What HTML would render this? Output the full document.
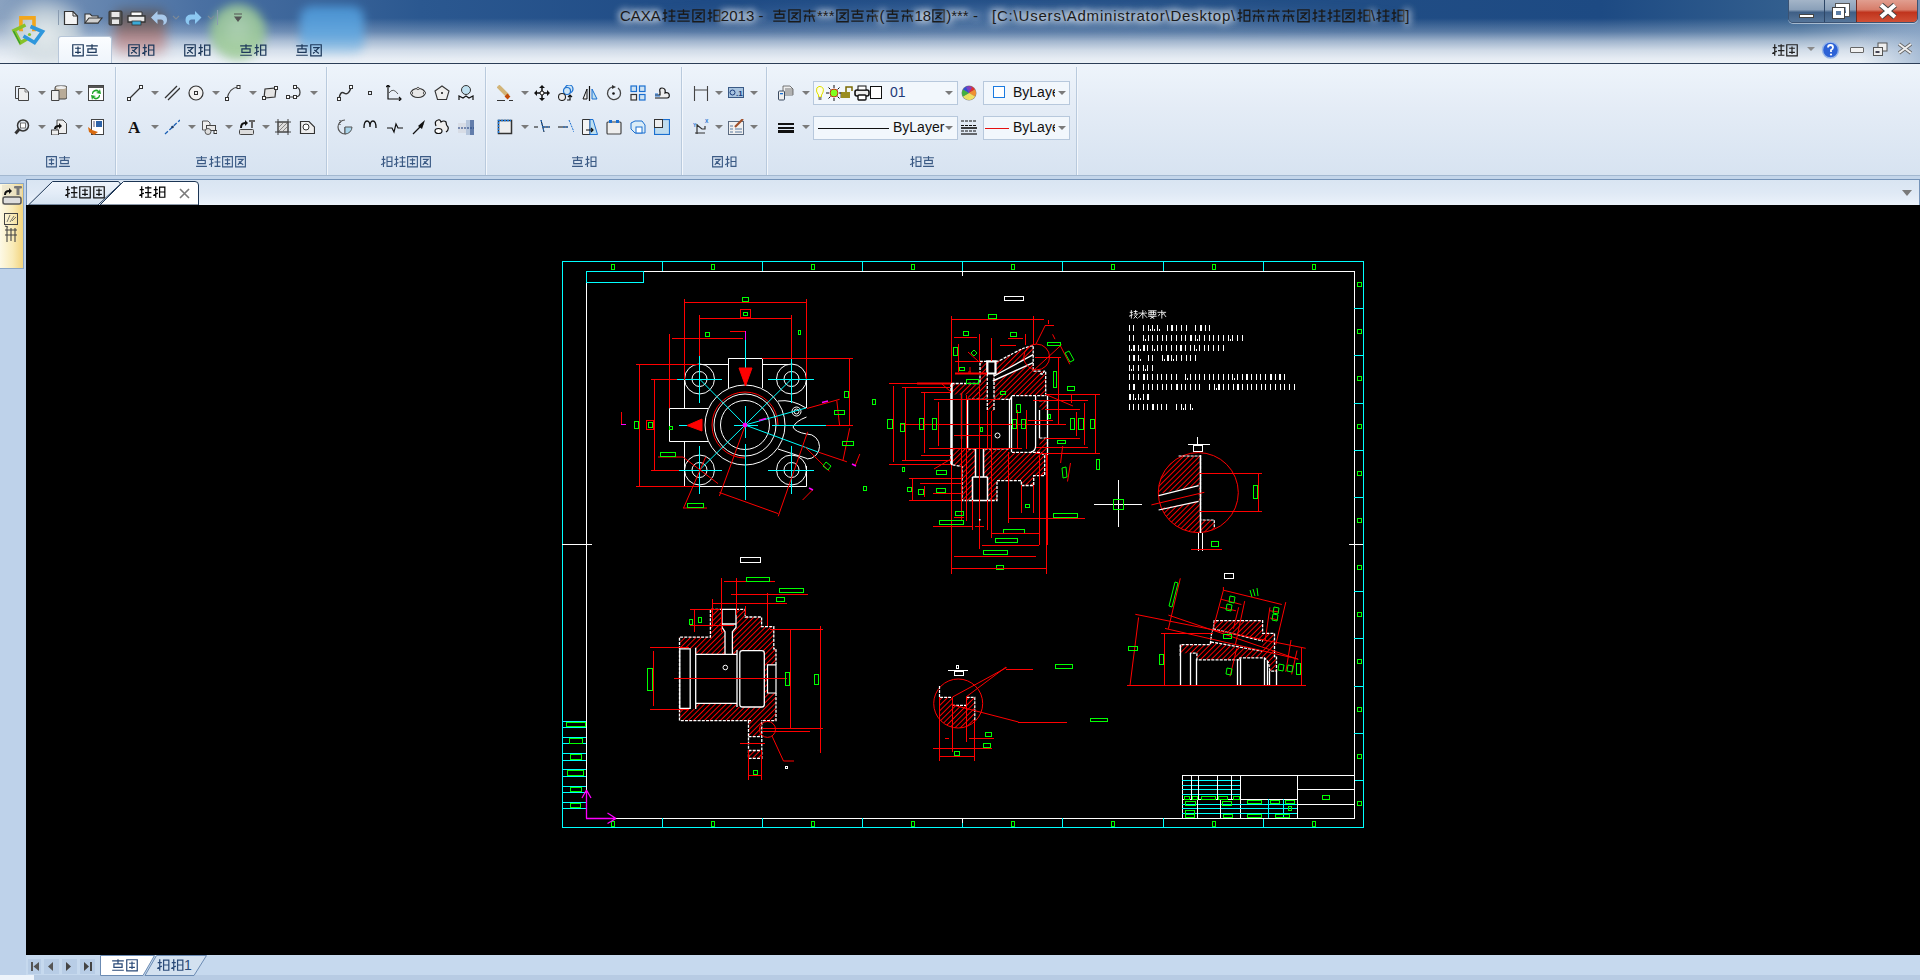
<!DOCTYPE html>
<html><head><meta charset="utf-8">
<style>
*{margin:0;padding:0;box-sizing:border-box}
html,body{width:1920px;height:980px;overflow:hidden;background:#000;font-family:"Liberation Sans",sans-serif}
.a{position:absolute}
#title{left:0;top:0;width:1920px;height:64px;overflow:hidden;
 background:linear-gradient(180deg,#2a5790 0px,#30609a 18px,#5f86b2 32px,#b9cade 44px,#e6edf5 54px,#edf2f8 63px)}
#ribbon{left:0;top:63px;width:1920px;height:113px;background:linear-gradient(180deg,#eef4fb 0%,#e4ecf6 40%,#d7e3f1 100%);border-top:1px solid #2c3e57;border-bottom:1px solid #a3b8d0}
.sep{position:absolute;top:5px;width:1px;height:105px;background:#c2d2e4;box-shadow:1px 0 0 #f5f9fd}
.glabel{position:absolute;top:90px;height:16px;font-size:13px;color:#3b5a84;text-align:center}
.dd{position:absolute;width:0;height:0;border-left:4px solid transparent;border-right:4px solid transparent;border-top:4px solid #7a7a7a}
.ic{position:absolute;width:16px;height:16px}
.combo{position:absolute;height:24px;border:1px solid #b7c8dc;background:#f2f7fc;font-size:13px;color:#1a1a1a}
#tabs{left:0;top:176px;width:1920px;height:29px;background:#c8d9ec}
#canvas{left:26px;top:205px;width:1894px;height:750px;background:#000}
#leftp{left:0;top:176px;width:26px;height:779px;background:#bed2ea}
#status{left:0;top:955px;width:1920px;height:25px;background:#c6d9ee}
.tabl{top:42px;height:18px;font-size:14px;color:#1e395b;text-align:center}
.ttx{top:7px;font-size:15px;color:#1a1a1a;white-space:nowrap;text-shadow:0 0 8px #fff,0 0 6px #fff,0 0 10px rgba(255,255,255,.9)}
.cjg{display:inline-block;width:1em;height:1em;vertical-align:-0.13em;fill:none;stroke:currentColor;stroke-width:1.05;overflow:visible}

</style></head><body>
<div id="title" class="a">
 <div class="a" style="left:0;top:0;width:1920px;height:64px;background:linear-gradient(90deg,#8aa2c0 0px,#6f8db4 60px,#4a70a2 200px,#2b5890 420px,#1f4b85 700px,#234f86 1200px,#1d4a83 1600px,#34608f 1800px,#7592b6 1920px)"></div>
 <div class="a" style="left:0;top:18px;width:1920px;height:46px;background:linear-gradient(180deg,rgba(235,240,246,0) 0%,rgba(225,233,242,.3) 30%,rgba(228,235,243,.65) 50%,rgba(232,238,245,.88) 70%,rgba(236,241,247,.97) 88%,#eef3f8 100%)"></div>
 <div class="a" style="left:1860px;top:24px;width:60px;height:40px;background:linear-gradient(90deg,rgba(130,160,195,0),rgba(130,160,195,.6))"></div>
 <div class="a" style="left:600px;top:0;width:830px;height:34px;background:radial-gradient(ellipse at 50% 50%,rgba(150,180,215,.35),rgba(80,120,170,0) 70%);filter:blur(4px)"></div>
 <div class="a" style="left:2px;top:-4px;width:80px;height:76px;background:radial-gradient(ellipse at 55% 50%,rgba(232,238,238,.95) 0%,rgba(210,220,224,.8) 40%,rgba(170,190,205,0) 75%);filter:blur(5px)"></div>
 <div class="a" style="left:114px;top:10px;width:52px;height:46px;border-radius:8px;background:linear-gradient(180deg,#5a5352 0%,#6e5e5b 30%,#b98383 60%,rgba(220,175,175,.6) 100%);filter:blur(6px);opacity:.85"></div>
 <div class="a" style="left:210px;top:4px;width:56px;height:56px;border-radius:50%;background:radial-gradient(circle at 50% 40%,#b9dcb3 0%,#9bca93 55%,#a5cf9d 100%);filter:blur(5px);opacity:.85"></div>
 <div class="a" style="left:300px;top:6px;width:64px;height:48px;border-radius:12px;background:linear-gradient(180deg,#4b97d8,#64aae2 60%,rgba(150,200,235,.5));filter:blur(5px);opacity:.9"></div>
 <!-- logo -->
 <svg class="a" style="left:0;top:0" width="60" height="60" viewBox="0 0 60 60">
  <path d="M20.9 30.5V17.9H34V30.5" fill="none" stroke="#f2a61c" stroke-width="3.6"/>
  <path d="M19 30.5H23M32 30.5H36" stroke="#f0a020" stroke-width="1.5"/>
  <path d="M25.5 25L14 30.5L20.5 42.8L28.5 38" fill="none" stroke="#86c22a" stroke-width="3.6" stroke-linejoin="miter"/>
  <path d="M13.5 31L20 43.5" stroke="#2f9a2f" stroke-width="1.2"/>
  <path d="M30.5 26.5L42.5 31.5L34.5 42.5L23.5 36" fill="none" stroke="#2f97dc" stroke-width="3.6"/>
  <circle cx="29.5" cy="34.5" r="1.6" fill="#86c22a"/>
 </svg>
 <!-- quick access -->
 <div class="a" style="left:58px;top:10px;width:1px;height:15px;background:#8a9cb0"></div>
 <svg class="a" style="left:62px;top:9px" width="180" height="18" viewBox="0 0 180 18">
  <path d="M2.5 2.5 H11 L15.5 7 V15.5 H2.5Z" fill="#f4f4f4" stroke="#333" stroke-width="1.2"/>
  <path d="M11 2.5 V7 H15.5" fill="none" stroke="#333" stroke-width="1"/>
  <path d="M23 5 H28 L30 7 H36 V14 H23Z" fill="#e8e8e8" stroke="#333" stroke-width="1.1"/>
  <path d="M23 14 L27 9 H40 L36 14Z" fill="#d0d0d0" stroke="#333" stroke-width="1.1"/>
  <rect x="47" y="2" width="13" height="14" rx="1" fill="#555" stroke="#333"/>
  <rect x="49.5" y="3" width="8" height="5" fill="#e8e8e8"/>
  <rect x="50" y="10.5" width="7" height="4.5" fill="#e8e8e8"/>
  <path d="M69 3 H80 V7 H69Z" fill="#fafafa" stroke="#333"/>
  <path d="M66 7 H83 V13 H66Z" fill="#e8e8e8" stroke="#333" stroke-width="1.3"/>
  <rect x="70" y="12" width="9" height="4" fill="#3aaad8" stroke="#333" stroke-width=".8"/>
  <path d="M89 8.5 L95.5 2 V5.5 H100 Q105 6 105 11 Q105 15 101 16 Q103 11 99 10.5 H95.5 V15Z" fill="#a9c9ea"/>
  <path d="M114 10 L119 15 L123 10Z" fill="none"/>
  <path d="M111 7 L114 10 L117 7" fill="none" stroke="#7d8a98" stroke-width="1.1"/>
  <path d="M139.5 8.5 L133 2 V5.5 H128.5 Q123.5 6 123.5 11 Q123.5 15 127.5 16 Q125.5 11 129.5 10.5 H133 V15Z" fill="#8cc8f2"/>
  <path d="M146 7 L149 10 L152 7" fill="none" stroke="#7d8a98" stroke-width="1.1"/>
  <rect x="155" y="1" width="1" height="15" fill="#8a9cb0"/>
  <path d="M172 5 H180 M173 8 L176 12 L179 8Z" stroke="#555" fill="#555" stroke-width="1.2"/>
 </svg>
 <!-- tabs -->
 <div class="a" style="left:58px;top:36px;width:54px;height:29px;border:1px solid #b7c6d8;border-bottom:none;border-radius:3px 3px 0 0;background:linear-gradient(180deg,#fbfdff,#eef4fb)"></div>
 <div class="a tabl" style="left:58px;width:54px"><svg class="cjg" viewBox="0 0 12 12"><path d="M1.5 1.5H10.5V11H1.5ZM3.5 4.5H8.5M6 3V9.5M3.5 8H8.5"/></svg><svg class="cjg" viewBox="0 0 12 12"><path d="M1 2.5H11M6 1V4.5M2.5 5H9.5V8H2.5ZM1 10.5H11"/></svg></div>
 <div class="a tabl" style="left:114px;width:54px"><svg class="cjg" viewBox="0 0 12 12"><path d="M1.5 1.5H10.5V11H1.5ZM3.5 4H8.5L3.5 9M4.5 6L8.5 9"/></svg><svg class="cjg" viewBox="0 0 12 12"><path d="M1.5 4H5M3.2 1V11M1 9L5 7M6.5 1.8H11V10.5H6.5ZM6.5 6H11"/></svg></div>
 <div class="a tabl" style="left:170px;width:54px"><svg class="cjg" viewBox="0 0 12 12"><path d="M1.5 1.5H10.5V11H1.5ZM3.5 4H8.5L3.5 9M4.5 6L8.5 9"/></svg><svg class="cjg" viewBox="0 0 12 12"><path d="M1.5 4H5M3.2 1V11M1 9L5 7M6.5 1.8H11V10.5H6.5ZM6.5 6H11"/></svg></div>
 <div class="a tabl" style="left:226px;width:54px"><svg class="cjg" viewBox="0 0 12 12"><path d="M1 2.5H11M6 1V4.5M2.5 5H9.5V8H2.5ZM1 10.5H11"/></svg><svg class="cjg" viewBox="0 0 12 12"><path d="M1.5 4H5M3.2 1V11M1 9L5 7M6.5 1.8H11V10.5H6.5ZM6.5 6H11"/></svg></div>
 <div class="a tabl" style="left:282px;width:54px"><svg class="cjg" viewBox="0 0 12 12"><path d="M1 2.5H11M6 1V4.5M2.5 5H9.5V8H2.5ZM1 10.5H11"/></svg><svg class="cjg" viewBox="0 0 12 12"><path d="M1.5 1.5H10.5V11H1.5ZM3.5 4H8.5L3.5 9M4.5 6L8.5 9"/></svg></div>
 <div class="a ttx" style="left:620px">CAXA<svg class="cjg" viewBox="0 0 12 12"><path d="M1.5 4H5M3.2 1V11M1 9L5 7M6 2.5H11.5M6 6.5H11.5M6 10.5H11.5M8.7 1V11"/></svg><svg class="cjg" viewBox="0 0 12 12"><path d="M1 2.5H11M6 1V4.5M2.5 5H9.5V8H2.5ZM1 10.5H11"/></svg><svg class="cjg" viewBox="0 0 12 12"><path d="M1.5 1.5H10.5V11H1.5ZM3.5 4H8.5L3.5 9M4.5 6L8.5 9"/></svg><svg class="cjg" viewBox="0 0 12 12"><path d="M1.5 4H5M3.2 1V11M1 9L5 7M6.5 1.8H11V10.5H6.5ZM6.5 6H11"/></svg>2013 - </div><div class="a ttx" style="left:772px"><svg class="cjg" viewBox="0 0 12 12"><path d="M1 2.5H11M6 1V4.5M2.5 5H9.5V8H2.5ZM1 10.5H11"/></svg><svg class="cjg" viewBox="0 0 12 12"><path d="M1.5 1.5H10.5V11H1.5ZM3.5 4H8.5L3.5 9M4.5 6L8.5 9"/></svg><svg class="cjg" viewBox="0 0 12 12"><path d="M1 2.5H11M6 1V4.5M1.5 6.5H10.5M3 5L2 11M8 5L10 11M6 6.5V11"/></svg>***<svg class="cjg" viewBox="0 0 12 12"><path d="M1.5 1.5H10.5V11H1.5ZM3.5 4H8.5L3.5 9M4.5 6L8.5 9"/></svg><svg class="cjg" viewBox="0 0 12 12"><path d="M1 2.5H11M6 1V4.5M2.5 5H9.5V8H2.5ZM1 10.5H11"/></svg><svg class="cjg" viewBox="0 0 12 12"><path d="M1 2.5H11M6 1V4.5M1.5 6.5H10.5M3 5L2 11M8 5L10 11M6 6.5V11"/></svg>(<svg class="cjg" viewBox="0 0 12 12"><path d="M1 2.5H11M6 1V4.5M2.5 5H9.5V8H2.5ZM1 10.5H11"/></svg><svg class="cjg" viewBox="0 0 12 12"><path d="M1 2.5H11M6 1V4.5M1.5 6.5H10.5M3 5L2 11M8 5L10 11M6 6.5V11"/></svg>18<svg class="cjg" viewBox="0 0 12 12"><path d="M1.5 1.5H10.5V11H1.5ZM3.5 4H8.5L3.5 9M4.5 6L8.5 9"/></svg>)*** - </div><div class="a ttx" style="left:992px;letter-spacing:.8px">[C:\Users\Administrator\Desktop\</div><div class="a ttx" style="left:1236px"><svg class="cjg" viewBox="0 0 12 12"><path d="M1.5 4H5M3.2 1V11M1 9L5 7M6.5 1.8H11V10.5H6.5ZM6.5 6H11"/></svg><svg class="cjg" viewBox="0 0 12 12"><path d="M1 2.5H11M6 1V4.5M1.5 6.5H10.5M3 5L2 11M8 5L10 11M6 6.5V11"/></svg><svg class="cjg" viewBox="0 0 12 12"><path d="M1 2.5H11M6 1V4.5M1.5 6.5H10.5M3 5L2 11M8 5L10 11M6 6.5V11"/></svg><svg class="cjg" viewBox="0 0 12 12"><path d="M1 2.5H11M6 1V4.5M1.5 6.5H10.5M3 5L2 11M8 5L10 11M6 6.5V11"/></svg><svg class="cjg" viewBox="0 0 12 12"><path d="M1.5 1.5H10.5V11H1.5ZM3.5 4H8.5L3.5 9M4.5 6L8.5 9"/></svg><svg class="cjg" viewBox="0 0 12 12"><path d="M1.5 4H5M3.2 1V11M1 9L5 7M6 2.5H11.5M6 6.5H11.5M6 10.5H11.5M8.7 1V11"/></svg><svg class="cjg" viewBox="0 0 12 12"><path d="M1.5 4H5M3.2 1V11M1 9L5 7M6 2.5H11.5M6 6.5H11.5M6 10.5H11.5M8.7 1V11"/></svg><svg class="cjg" viewBox="0 0 12 12"><path d="M1.5 1.5H10.5V11H1.5ZM3.5 4H8.5L3.5 9M4.5 6L8.5 9"/></svg><svg class="cjg" viewBox="0 0 12 12"><path d="M1.5 4H5M3.2 1V11M1 9L5 7M6.5 1.8H11V10.5H6.5ZM6.5 6H11"/></svg>\<svg class="cjg" viewBox="0 0 12 12"><path d="M1.5 4H5M3.2 1V11M1 9L5 7M6 2.5H11.5M6 6.5H11.5M6 10.5H11.5M8.7 1V11"/></svg><svg class="cjg" viewBox="0 0 12 12"><path d="M1.5 4H5M3.2 1V11M1 9L5 7M6.5 1.8H11V10.5H6.5ZM6.5 6H11"/></svg>]</div>
 <!-- caption buttons -->
 <div class="a" style="left:1788px;top:-3px;width:130px;height:26px;border:1px solid #3b5373;border-radius:0 0 5px 5px;overflow:hidden;box-shadow:0 1px 0 rgba(255,255,255,.5)">
  <div class="a" style="left:0;top:0;width:36px;height:26px;background:linear-gradient(180deg,#a9b9cb 0%,#8aa0b9 45%,#3f5f86 55%,#5a7a9e 100%);border-right:1px solid #2d4666"></div>
  <div class="a" style="left:36px;top:0;width:32px;height:26px;background:linear-gradient(180deg,#a9b9cb 0%,#8aa0b9 45%,#3f5f86 55%,#5a7a9e 100%);border-right:1px solid #6e2a20"></div>
  <div class="a" style="left:68px;top:0;width:62px;height:26px;background:linear-gradient(180deg,#e3a597 0%,#d77d6a 45%,#c0341d 55%,#d4553a 100%)"></div>
  <div class="a" style="left:10px;top:16px;width:15px;height:4px;background:#fff;border:1px solid #444"></div>
  <div class="a" style="left:47px;top:6px;width:13px;height:12px;border:3px solid #fff;box-shadow:0 0 0 1px #555"></div>
  <div class="a" style="left:44px;top:10px;width:11px;height:10px;border:3px solid #fff;background:#5d7ea4;box-shadow:0 0 0 1px #444"></div>
  <svg class="a" style="left:88px;top:4px" width="22" height="18" viewBox="0 0 22 18"><path d="M4 3 L18 15 M18 3 L4 15" stroke="#444" stroke-width="6"/><path d="M4 3 L18 15 M18 3 L4 15" stroke="#fff" stroke-width="4"/></svg>
 </div>
 <div class="a" style="left:1771px;top:42px;font-size:14px;color:#222"><svg class="cjg" viewBox="0 0 12 12"><path d="M1.5 4H5M3.2 1V11M1 9L5 7M6 2.5H11.5M6 6.5H11.5M6 10.5H11.5M8.7 1V11"/></svg><svg class="cjg" viewBox="0 0 12 12"><path d="M1.5 1.5H10.5V11H1.5ZM3.5 4.5H8.5M6 3V9.5M3.5 8H8.5"/></svg></div>
 <div class="dd" style="left:1807px;top:47px;border-top-color:#8a8a8a"></div>
 <svg class="a" style="left:1821px;top:40px" width="19" height="20" viewBox="0 0 19 20"><circle cx="9.5" cy="10" r="8" fill="#2d62d6" stroke="#9ab7e8" stroke-width="1.5"/><path d="M7 7.5 Q7 5 9.5 5 Q12 5 12 7.5 Q12 9 10 10 V12" fill="none" stroke="#fff" stroke-width="1.8"/><circle cx="10" cy="14.5" r="1.1" fill="#fff"/></svg>
 <div class="a" style="left:1850px;top:47px;width:14px;height:6px;border:1px solid #666;background:#f2f2f2;border-radius:1px"></div>
 <svg class="a" style="left:1872px;top:42px" width="17" height="15" viewBox="0 0 17 15"><rect x="6" y="1" width="9" height="8" fill="#eee" stroke="#555"/><rect x="1.5" y="5.5" width="9" height="8" fill="#eee" stroke="#555"/><rect x="3.5" y="9" width="4" height="2" fill="#445"/></svg>
 <svg class="a" style="left:1897px;top:42px" width="16" height="13" viewBox="0 0 16 13"><path d="M2 2 L14 11 M14 2 L2 11" stroke="#666" stroke-width="3.6"/><path d="M2 2 L14 11 M14 2 L2 11" stroke="#eee" stroke-width="2"/></svg>
</div>
<div id="ribbon" class="a"></div>
<svg class="a" style="left:14px;top:85px" width="16" height="16" viewBox="0 0 16 16"><path d="M1.5 1.5 H6 M1.5 1.5 V13.5 H4" fill="none" stroke="#444"/><path d="M4.5 3.5 H11 L14.5 7 V15.5 H4.5Z" fill="#eee" stroke="#444"/><path d="M11 3.5 V7 H14.5" fill="none" stroke="#666" stroke-width=".8"/></svg>
<div class="dd" style="left:38px;top:91px"></div>
<svg class="a" style="left:51px;top:85px" width="16" height="16" viewBox="0 0 16 16"><rect x="4" y="1" width="12" height="13" rx="2" fill="#b8ab98" stroke="#444"/><ellipse cx="10" cy="2.5" rx="5" ry="1.5" fill="#eee"/><path d="M0.5 5.5 H8 V15.5 H0.5Z" fill="#eee" stroke="#444"/></svg>
<div class="dd" style="left:75px;top:91px"></div>
<svg class="a" style="left:88px;top:85px" width="16" height="16" viewBox="0 0 16 16"><rect x=".5" y=".5" width="15" height="15" fill="#fff" stroke="#444"/><rect x="1" y="1" width="14" height="2" fill="#555"/><path d="M4 9 A4 4 0 0 1 11 6 L12 4 L13 9 L8 8 L10 7 A3 3 0 0 0 5 9Z M12 10 A4 4 0 0 1 5 13 L4 15 L3 10 L8 11 L6 12 A3 3 0 0 0 11 10Z" fill="#1fa82a"/></svg>
<svg class="a" style="left:14px;top:119px" width="16" height="16" viewBox="0 0 16 16"><circle cx="9" cy="6.5" r="5.5" fill="#dfe6ee" stroke="#333" stroke-width="1.5"/><rect x="6.5" y="4" width="5" height="5" fill="#fff" stroke="#555" stroke-width=".8"/><path d="M5 10.5 L1.5 14.5" stroke="#333" stroke-width="3"/></svg>
<div class="dd" style="left:38px;top:125px"></div>
<svg class="a" style="left:51px;top:119px" width="16" height="16" viewBox="0 0 16 16"><path d="M6 1 H12 L15.5 4.5 V14.5 H6Z" fill="#eee" stroke="#444"/><rect x=".5" y="11" width="7" height="5" fill="#eee" stroke="#444"/><path d="M3 10 Q3 6 8 6 L8 4 L11 7 L8 10 V8 Q5 8 5 10" fill="#111"/></svg>
<div class="dd" style="left:75px;top:125px"></div>
<svg class="a" style="left:88px;top:119px" width="16" height="16" viewBox="0 0 16 16"><rect x="3.5" y=".5" width="12" height="15" fill="#fff" stroke="#444"/><rect x="5" y="2" width="2" height="6" fill="#aab"/><rect x="8" y="2" width="6" height="6" fill="#2e63a8"/><path d="M0 8 L4 11 L10 13 L6 16 L1 13Z" fill="#d86a10"/></svg>
<svg class="a" style="left:127px;top:85px" width="16" height="16" viewBox="0 0 16 16"><path d="M2 14 L14 2" stroke="#333" stroke-width="1.2"/><rect x="0.5" y="12.5" width="3" height="3" fill="#fff" stroke="#333" stroke-width="1"/><rect x="12.5" y="0.5" width="3" height="3" fill="#fff" stroke="#333" stroke-width="1"/></svg>
<div class="dd" style="left:151px;top:91px"></div>
<svg class="a" style="left:164px;top:85px" width="16" height="16" viewBox="0 0 16 16"><path d="M1 13 L13 1 M4 15 L16 3" stroke="#333" stroke-width="1.3"/></svg>
<svg class="a" style="left:188px;top:85px" width="16" height="16" viewBox="0 0 16 16"><circle cx="8" cy="8" r="7" fill="#f2f2f2" stroke="#333" stroke-width="1.2"/><rect x="6.5" y="6.5" width="3" height="3" fill="none" stroke="#333"/></svg>
<div class="dd" style="left:212px;top:91px"></div>
<svg class="a" style="left:225px;top:85px" width="16" height="16" viewBox="0 0 16 16"><path d="M2 14 Q4 3 13 2" fill="none" stroke="#444" stroke-width="1.2"/><rect x="0.5" y="12.5" width="3" height="3" fill="#fff" stroke="#333" stroke-width="1"/><rect x="12" y="0.5" width="3" height="3" fill="#fff" stroke="#333" stroke-width="1"/></svg>
<div class="dd" style="left:249px;top:91px"></div>
<svg class="a" style="left:262px;top:85px" width="16" height="16" viewBox="0 0 16 16"><path d="M2 13 L3 4 L14 3 L13 12Z" fill="#e4e4e4" stroke="#333" stroke-width="1.2"/><rect x="0.5" y="11.5" width="3" height="3" fill="#fff" stroke="#333" stroke-width="1"/><rect x="12.5" y="1.5" width="3" height="3" fill="#fff" stroke="#333" stroke-width="1"/></svg>
<div class="dd" style="left:310px;top:91px"></div>
<svg class="a" style="left:286px;top:85px" width="16" height="16" viewBox="0 0 16 16"><path d="M2 12 H9 Q14 12 14 7.5 Q14 2 9 2" fill="none" stroke="#333" stroke-width="1.2"/><rect x="0.5" y="10.5" width="3" height="3" fill="#fff" stroke="#333" stroke-width="1"/><rect x="7.5" y="10.5" width="3" height="3" fill="#fff" stroke="#333" stroke-width="1"/><rect x="7.5" y="0.5" width="3" height="3" fill="#fff" stroke="#333" stroke-width="1"/></svg>
<svg class="a" style="left:128px;top:119px" width="16" height="16" viewBox="0 0 16 16"><text x="0" y="14" font-family="Liberation Serif" font-weight="bold" font-size="17" fill="#111">A</text></svg>
<div class="dd" style="left:151px;top:125px"></div>
<svg class="a" style="left:164px;top:119px" width="16" height="16" viewBox="0 0 16 16"><path d="M1 15 L16 1" stroke="#1a5fb4" stroke-width="1.3" stroke-dasharray="4 2"/><circle cx="8.5" cy="8" r="1.3" fill="#1a3a6a"/></svg>
<div class="dd" style="left:188px;top:125px"></div>
<svg class="a" style="left:201px;top:119px" width="16" height="16" viewBox="0 0 16 16"><path d="M1.5 2 H7 L9 4 V11 H1.5Z" fill="#eee" stroke="#555"/><rect x="5.5" y="6.5" width="9" height="5" fill="#e8e8e8" stroke="#444"/><circle cx="7" cy="12.5" r="3" fill="#ddd" stroke="#555"/><rect x="13" y="11.5" width="3" height="3" fill="#fff" stroke="#333" stroke-width="1"/></svg>
<div class="dd" style="left:225px;top:125px"></div>
<svg class="a" style="left:239px;top:119px" width="16" height="16" viewBox="0 0 16 16"><path d="M1 9 Q1 3 6 3 L6 1 L9 4 L6 7 V5 Q3 5 3 9Z" fill="#111"/><rect x="10" y="1" width="6" height="2" fill="#666"/><rect x="12" y="3" width="2" height="6" fill="#666"/><rect x=".5" y="10.5" width="14" height="5" rx="1" fill="#ddd" stroke="#444"/></svg>
<div class="dd" style="left:262px;top:125px"></div>
<svg class="a" style="left:275px;top:119px" width="16" height="16" viewBox="0 0 16 16"><rect x="3" y="3" width="10" height="10" fill="#ddd" stroke="#444"/><path d="M0 3 H16 M0 13 H16 M3 0 V16 M13 0 V16" stroke="#444"/><path d="M4 8 L8 4 M4 12 L12 4 M8 12 L12 8" stroke="#888"/></svg>
<svg class="a" style="left:299px;top:119px" width="16" height="16" viewBox="0 0 16 16"><path d="M1.5 2.5 H10 L15.5 8 V14.5 H1.5Z" fill="#eee" stroke="#333" stroke-width="1.2"/><circle cx="7" cy="8" r="3" fill="#fff" stroke="#333"/></svg>
<svg class="a" style="left:337px;top:85px" width="16" height="16" viewBox="0 0 16 16"><path d="M2 14 Q3 6 7 8 Q11 11 14 3" fill="none" stroke="#333" stroke-width="1.5"/><rect x="0.5" y="12.5" width="3" height="3" fill="#fff" stroke="#333" stroke-width="1"/><rect x="12.5" y="0.5" width="3" height="3" fill="#fff" stroke="#333" stroke-width="1"/></svg>
<svg class="a" style="left:368px;top:91px" width="4" height="4" viewBox="0 0 4 4"><rect x=".5" y=".5" width="3" height="3" fill="none" stroke="#333"/></svg>
<svg class="a" style="left:386px;top:85px" width="16" height="16" viewBox="0 0 16 16"><path d="M2 0 V14 H15 M0 2 L2 0 L4 2 M13 12 L15 14 L13 16" fill="none" stroke="#111" stroke-width="1.2"/><path d="M3 8 Q7 2 12 9" fill="none" stroke="#333" stroke-width=".8"/></svg>
<svg class="a" style="left:410px;top:85px" width="16" height="16" viewBox="0 0 16 16"><ellipse cx="8" cy="8" rx="7" ry="4.5" fill="#e8e8e8" stroke="#333" stroke-width="1.2"/><circle cx="8" cy="3.5" r="1.2" fill="#fff" stroke="#333" stroke-width=".8"/><circle cx="1.5" cy="8" r="1.2" fill="#fff" stroke="#333" stroke-width=".8"/><circle cx="14.5" cy="8" r="1.2" fill="#fff" stroke="#333" stroke-width=".8"/></svg>
<svg class="a" style="left:434px;top:85px" width="16" height="16" viewBox="0 0 16 16"><path d="M8 1 L15 6 L12.5 14.5 H3.5 L1 6Z" fill="#eee" stroke="#333" stroke-width="1.1"/><circle cx="8" cy="8" r="1" fill="#111"/></svg>
<svg class="a" style="left:458px;top:85px" width="16" height="16" viewBox="0 0 16 16"><circle cx="8" cy="5" r="4.5" fill="#bfe0f0" stroke="#333"/><path d="M1 15 V11 L5 13 L8 11 L11 13 L15 11 V15" fill="none" stroke="#111" stroke-width="1.2"/></svg>
<svg class="a" style="left:337px;top:119px" width="16" height="16" viewBox="0 0 16 16"><path d="M8 8 V15 A7 7 0 1 1 8 1" fill="none" stroke="#555" stroke-width="1.2"/><path d="M8 8 H15 A7 7 0 0 1 8 15Z" fill="#a8d4ea" stroke="#555"/><path d="M3 1 V7" stroke="#333" stroke-dasharray="1 1"/></svg>
<svg class="a" style="left:363px;top:119px" width="16" height="16" viewBox="0 0 16 16"><path d="M1 9 Q1 2 4 2 Q7 2 7 8 Q7 2 10 2 Q13 2 13 9" fill="none" stroke="#111" stroke-width="1.3"/></svg>
<svg class="a" style="left:387px;top:119px" width="16" height="16" viewBox="0 0 16 16"><path d="M0 9 H5 L7 13 L9 5 L11 9 H16" fill="none" stroke="#111" stroke-width="1.2"/></svg>
<svg class="a" style="left:412px;top:119px" width="16" height="16" viewBox="0 0 16 16"><path d="M1 15 L11 5" stroke="#111" stroke-width="1.2"/><path d="M6 7 L13 1 L10 10Z" fill="#111"/></svg>
<svg class="a" style="left:434px;top:119px" width="16" height="16" viewBox="0 0 16 16"><path d="M2 7 Q0 2 4 1 Q6 0 7 3 Q10 1 12 3 Q12 6 14 8 Q15 11 12 13" fill="#eee" stroke="#111" stroke-width="1.2"/><ellipse cx="4.5" cy="12" rx="3.5" ry="2.5" fill="#fff" stroke="#111" stroke-width="1.2"/></svg>
<svg class="a" style="left:458px;top:119px" width="16" height="16" viewBox="0 0 16 16"><rect x="0" y="4" width="9" height="10" fill="#d8dde6"/><rect x="8" y="1" width="8" height="15" fill="#b6c6dc"/><path d="M0 9 H16" stroke="#1a3a7a" stroke-dasharray="2 1"/><rect x="12" y="1" width="4" height="15" fill="#2a4c8a" opacity=".6"/></svg>
<svg class="a" style="left:497px;top:85px" width="16" height="16" viewBox="0 0 16 16"><path d="M1 1 L11 11" stroke="#d2b478" stroke-width="4"/><path d="M9 10 L12 13" stroke="#c24a0a" stroke-width="4"/><path d="M0 15.5 H8 M12 15.5 H16" stroke="#333"/></svg>
<div class="dd" style="left:521px;top:91px"></div>
<svg class="a" style="left:534px;top:85px" width="16" height="16" viewBox="0 0 16 16"><path d="M8 1 V15 M1 8 H15" stroke="#111" stroke-width="1.5"/><path d="M8 0 L5 3 H11Z M8 16 L5 13 H11Z M0 8 L3 5 V11Z M16 8 L13 5 V11Z" fill="#111"/><circle cx="8" cy="8" r="2" fill="#fff" stroke="#111"/></svg>
<svg class="a" style="left:558px;top:85px" width="16" height="16" viewBox="0 0 16 16"><circle cx="11" cy="4" r="4" fill="#cfe6f5" stroke="#1a6fd0" stroke-width="1.2"/><circle cx="9" cy="6" r="3.5" fill="#cfe6f5" stroke="#1a6fd0" stroke-width="1.2"/><circle cx="4" cy="12" r="3.5" fill="#eee" stroke="#222" stroke-width="1.1"/><path d="M9 15 H12 V11 M10 12 L12 10 L14 12" fill="none" stroke="#111" stroke-width="1.2"/></svg>
<svg class="a" style="left:582px;top:85px" width="16" height="16" viewBox="0 0 16 16"><path d="M7.5 1 V16" stroke="#111" stroke-width="1.2"/><path d="M5 4 L1 14 H5Z" fill="#eee" stroke="#111"/><path d="M10 4 L15 14 H10Z" fill="#bfe0f0" stroke="#1a6fd0"/></svg>
<svg class="a" style="left:606px;top:85px" width="16" height="16" viewBox="0 0 16 16"><path d="M12 3 A6.5 6.5 0 1 1 6 2" fill="none" stroke="#444" stroke-width="1.3"/><path d="M6 0 L10 2 L6 4Z" fill="#333"/><circle cx="7.5" cy="8.5" r="1.3" fill="#111"/></svg>
<svg class="a" style="left:630px;top:85px" width="16" height="16" viewBox="0 0 16 16"><rect x="1" y="1" width="5.5" height="5.5" fill="#cfe3f2" stroke="#1a6fd0" stroke-width="1.2"/><rect x="9.5" y="1" width="5.5" height="5.5" fill="#cfe3f2" stroke="#1a6fd0" stroke-width="1.2"/><rect x="1" y="9.5" width="5.5" height="5.5" fill="#eee" stroke="#333" stroke-width="1.2"/><rect x="9.5" y="9.5" width="5.5" height="5.5" fill="#cfe3f2" stroke="#1a6fd0" stroke-width="1.2"/></svg>
<svg class="a" style="left:654px;top:85px" width="16" height="16" viewBox="0 0 16 16"><path d="M1 13 H13 Q16 13 15 9 Q14 7 11 8 Q12 3 8 3 Q5 3 6 7 V10 H1" fill="#eee" stroke="#111" stroke-width="1.2"/><path d="M1 11 H6 M1 9 H4" stroke="#1a6fd0"/></svg>
<svg class="a" style="left:497px;top:119px" width="16" height="16" viewBox="0 0 16 16"><rect x="1.5" y="1.5" width="13" height="13" fill="#eee" stroke="#333" stroke-width="1.5"/><path d="M1.5 14 V1.5 H14" fill="none" stroke="#1a7ae0" stroke-width="1.5" stroke-dasharray="2 1"/></svg>
<div class="dd" style="left:521px;top:125px"></div>
<svg class="a" style="left:534px;top:119px" width="16" height="16" viewBox="0 0 16 16"><path d="M0 8 H4 M7 1 L10 13 M9 8 H16" stroke="#111" stroke-width="1"/><path d="M7 1 L10 13 M9 8 H16" stroke="#1a6fd0" stroke-width="1" stroke-dasharray="2 1"/></svg>
<svg class="a" style="left:558px;top:119px" width="16" height="16" viewBox="0 0 16 16"><path d="M0 8 H5 M5 8 H10" stroke="#111" stroke-width="1"/><path d="M5 8 H10 M11 1 L16 13" stroke="#1a6fd0" stroke-width="1" stroke-dasharray="2 1"/></svg>
<svg class="a" style="left:582px;top:119px" width="16" height="16" viewBox="0 0 16 16"><path d="M.5 .5 H8 V15.5 H.5Z" fill="#f4f4f4" stroke="#333"/><path d="M8 .5 H11 L15.5 15.5 H8Z" fill="#bfe0f0" stroke="#1a6fd0"/><path d="M4 11 H11 M9 9 L11 11 L9 13" fill="none" stroke="#111" stroke-width="1.2"/></svg>
<svg class="a" style="left:606px;top:119px" width="16" height="16" viewBox="0 0 16 16"><rect x="1" y="3" width="14" height="12" rx="1" fill="#eee" stroke="#444" stroke-width="1.2"/><rect x="3" y="1" width="3" height="3" fill="#1a6fd0"/><rect x="10" y="1" width="3" height="3" fill="#1a6fd0"/></svg>
<svg class="a" style="left:630px;top:119px" width="16" height="16" viewBox="0 0 16 16"><path d="M1 4 L5 2 H12 L15 6 V14 H5 L1 10Z" fill="#dbecf7" stroke="#1a6fd0"/><rect x="6" y="8" width="6" height="6" fill="#fff" stroke="#1a6fd0"/></svg>
<svg class="a" style="left:654px;top:119px" width="16" height="16" viewBox="0 0 16 16"><rect x=".5" y=".5" width="15" height="15" fill="#bfdcef" stroke="#1a6fd0" stroke-width="1.2"/><rect x=".5" y=".5" width="8" height="8" fill="#eee" stroke="#333"/></svg>
<svg class="a" style="left:693px;top:85px" width="16" height="16" viewBox="0 0 16 16"><path d="M1.5 1 V16 M14.5 1 V16 M1.5 5 H14.5" stroke="#444" stroke-width="1.1"/></svg>
<div class="dd" style="left:715px;top:91px"></div>
<svg class="a" style="left:728px;top:85px" width="16" height="16" viewBox="0 0 16 16"><rect x=".5" y="2.5" width="15" height="10" fill="#a8c4e0" stroke="#3a5a86"/><circle cx="4.5" cy="7.5" r="2.5" fill="none" stroke="#1a3a7a"/><text x="8" y="11" font-size="8" font-family="Liberation Sans" font-weight="bold" fill="#1a3a7a">.1</text></svg>
<div class="dd" style="left:750px;top:91px"></div>
<svg class="a" style="left:693px;top:119px" width="16" height="16" viewBox="0 0 16 16"><path d="M4 5 V15 M2 14 H12 M4 6 L9 10 H12 V7" fill="none" stroke="#333" stroke-width="1.2"/><text x="0" y="8" font-size="5" fill="#1a6fd0" font-family="Liberation Sans" font-weight="bold">Y</text><text x="12" y="4" font-size="5" fill="#1a6fd0" font-family="Liberation Sans" font-weight="bold">X</text></svg>
<div class="dd" style="left:715px;top:125px"></div>
<svg class="a" style="left:728px;top:119px" width="16" height="16" viewBox="0 0 16 16"><rect x=".5" y="2.5" width="15" height="13" fill="#f0f0f0" stroke="#5a6a80"/><path d="M2 7 H5 M2 10 H5 M2 13 H5 M7 10 H14 M7 13 H14" stroke="#5a7aa0"/><path d="M7 8 L15 0" stroke="#a0502a" stroke-width="2.2"/></svg>
<div class="dd" style="left:750px;top:125px"></div>
<svg class="a" style="left:778px;top:85px" width="16" height="16" viewBox="0 0 16 16"><path d="M5 1 H12 L15 4 V10 H5Z" fill="#eee" stroke="#555" stroke-width=".8"/><path d="M7 4 H15 M7 6 H15 M7 8 H15" stroke="#555" stroke-width=".8"/><rect x=".5" y="6" width="6" height="9" rx="1" fill="#eee" stroke="#3a4a60"/><rect x="2" y="8" width="3" height="1.3" fill="#1a6fd0"/></svg>
<div class="dd" style="left:802px;top:91px"></div>
<svg class="a" style="left:778px;top:119px" width="16" height="16" viewBox="0 0 16 16"><rect x="0" y="4" width="16" height="2" fill="#111"/><rect x="0" y="8" width="16" height="2" fill="#111"/><rect x="0" y="11" width="16" height="3" fill="#111"/></svg>
<div class="dd" style="left:802px;top:125px"></div>
<div class="combo" style="left:813px;top:81px;width:145px"></div>
<svg class="a" style="left:815px;top:85px" width="10" height="16" viewBox="0 0 10 16"><path d="M4 1.5 Q1 2 1.5 6 Q2 8 3.5 10 V12 H6.5 V10 Q8 8 8.3 6 Q9 2 5 1.5Z" fill="#fffde0" stroke="#e0e000" stroke-width="1"/><rect x="3.5" y="12" width="3" height="3" fill="#888"/></svg>
<svg class="a" style="left:826px;top:85px" width="16" height="16" viewBox="0 0 16 16"><circle cx="8" cy="8" r="4" fill="#80ff20" stroke="#c00" stroke-width=".8"/><path d="M8 0 V3 M8 13 V16 M0 8 H3 M13 8 H16 M2.5 2.5 L4.5 4.5 M11.5 11.5 L13.5 13.5 M13.5 2.5 L11.5 4.5 M2.5 13.5 L4.5 11.5" stroke="#111" stroke-width="1"/></svg>
<svg class="a" style="left:840px;top:85px" width="14" height="16" viewBox="0 0 14 16"><path d="M0.5 8 H10 M0.5 10 H10 M0.5 12 H10" stroke="#222" stroke-width="1.3"/><rect x="1" y="7" width="9" height="6" fill="#c8b400" opacity=".6"/><path d="M6 7 V2 H12 V6" fill="none" stroke="#7a6a00" stroke-width="1.5"/></svg>
<svg class="a" style="left:854px;top:85px" width="16" height="16" viewBox="0 0 16 16"><rect x="1" y="5" width="14" height="6" rx="2" fill="#eee" stroke="#111" stroke-width="1.6"/><rect x="4" y="1" width="8" height="4" fill="#fff" stroke="#111"/><rect x="4" y="10" width="8" height="5" rx="1" fill="#fff" stroke="#111" stroke-width="1.4"/></svg>
<div class="a" style="left:870px;top:86px;width:12px;height:13px;border:1px solid #111;background:#fff"></div>
<div class="a" style="left:890px;top:84px;font-size:14px;color:#1e3a78">01</div>
<div class="dd" style="left:945px;top:91px"></div>
<svg class="a" style="left:961px;top:85px" width="16" height="16" viewBox="0 0 16 16"><circle cx="8" cy="8" r="7.5" fill="#888"/><path d="M8 8 L8 1 A7 7 0 0 1 14 4.5Z" fill="#e03030"/><path d="M8 8 L14 4.5 A7 7 0 0 1 14 11.5Z" fill="#f09030"/><path d="M8 8 L14 11.5 A7 7 0 0 1 8 15Z" fill="#f0e060"/><path d="M8 8 L8 15 A7 7 0 0 1 2 11.5Z" fill="#e8e060"/><path d="M8 8 L2 11.5 A7 7 0 0 1 2 4.5Z" fill="#40b040"/><path d="M8 8 L2 4.5 A7 7 0 0 1 8 1Z" fill="#3050d0"/><path d="M8 8 L5 2 A7 7 0 0 1 11 2Z" fill="#8040c0"/></svg>
<div class="combo" style="left:983px;top:81px;width:87px"></div>
<div class="a" style="left:993px;top:86px;width:12px;height:12px;border:1px solid #1a7ae0;background:#fff"></div>
<div class="a" style="left:1013px;top:84px;width:42px;font-size:14px;color:#111;overflow:hidden;white-space:nowrap">ByLayer</div>
<div class="dd" style="left:1058px;top:91px"></div>
<div class="combo" style="left:813px;top:116px;width:145px"></div>
<div class="a" style="left:818px;top:128px;width:71px;height:1px;background:#111"></div>
<div class="a" style="left:893px;top:119px;font-size:14px;color:#111">ByLayer</div>
<div class="dd" style="left:945px;top:126px"></div>
<svg class="a" style="left:961px;top:119px" width="16" height="16" viewBox="0 0 16 16"><path d="M0 2 H16 M0 6.5 H16 M0 12 H16" stroke="#111" stroke-width="1.2" stroke-dasharray="3 1"/><path d="M0 9 H16" stroke="#111" stroke-width="1.6"/><path d="M0 15 H16" stroke="#111" stroke-width="1.2"/></svg>
<div class="combo" style="left:983px;top:116px;width:87px"></div>
<div class="a" style="left:985px;top:128px;width:24px;height:1px;background:#e51010"></div>
<div class="a" style="left:1013px;top:119px;width:42px;font-size:14px;color:#111;overflow:hidden;white-space:nowrap">ByLayer</div>
<div class="dd" style="left:1058px;top:126px"></div>
<div class="a" style="left:115px;top:67px;width:1px;height:108px;background:#b9cadd;box-shadow:1px 0 0 #f3f7fc"></div>
<div class="a" style="left:326px;top:67px;width:1px;height:108px;background:#b9cadd;box-shadow:1px 0 0 #f3f7fc"></div>
<div class="a" style="left:485px;top:67px;width:1px;height:108px;background:#b9cadd;box-shadow:1px 0 0 #f3f7fc"></div>
<div class="a" style="left:681px;top:67px;width:1px;height:108px;background:#b9cadd;box-shadow:1px 0 0 #f3f7fc"></div>
<div class="a" style="left:766px;top:67px;width:1px;height:108px;background:#b9cadd;box-shadow:1px 0 0 #f3f7fc"></div>
<div class="a" style="left:1076px;top:67px;width:1px;height:108px;background:#b9cadd;box-shadow:1px 0 0 #f3f7fc"></div>
<div class="a glabel" style="left:0px;top:154px;width:115px"><svg class="cjg" viewBox="0 0 12 12"><path d="M1.5 1.5H10.5V11H1.5ZM3.5 4.5H8.5M6 3V9.5M3.5 8H8.5"/></svg><svg class="cjg" viewBox="0 0 12 12"><path d="M1 2.5H11M6 1V4.5M2.5 5H9.5V8H2.5ZM1 10.5H11"/></svg></div>
<div class="a glabel" style="left:116px;top:154px;width:210px"><svg class="cjg" viewBox="0 0 12 12"><path d="M1 2.5H11M6 1V4.5M2.5 5H9.5V8H2.5ZM1 10.5H11"/></svg><svg class="cjg" viewBox="0 0 12 12"><path d="M1.5 4H5M3.2 1V11M1 9L5 7M6 2.5H11.5M6 6.5H11.5M6 10.5H11.5M8.7 1V11"/></svg><svg class="cjg" viewBox="0 0 12 12"><path d="M1.5 1.5H10.5V11H1.5ZM3.5 4.5H8.5M6 3V9.5M3.5 8H8.5"/></svg><svg class="cjg" viewBox="0 0 12 12"><path d="M1.5 1.5H10.5V11H1.5ZM3.5 4H8.5L3.5 9M4.5 6L8.5 9"/></svg></div>
<div class="a glabel" style="left:327px;top:154px;width:158px"><svg class="cjg" viewBox="0 0 12 12"><path d="M1.5 4H5M3.2 1V11M1 9L5 7M6.5 1.8H11V10.5H6.5ZM6.5 6H11"/></svg><svg class="cjg" viewBox="0 0 12 12"><path d="M1.5 4H5M3.2 1V11M1 9L5 7M6 2.5H11.5M6 6.5H11.5M6 10.5H11.5M8.7 1V11"/></svg><svg class="cjg" viewBox="0 0 12 12"><path d="M1.5 1.5H10.5V11H1.5ZM3.5 4.5H8.5M6 3V9.5M3.5 8H8.5"/></svg><svg class="cjg" viewBox="0 0 12 12"><path d="M1.5 1.5H10.5V11H1.5ZM3.5 4H8.5L3.5 9M4.5 6L8.5 9"/></svg></div>
<div class="a glabel" style="left:486px;top:154px;width:195px"><svg class="cjg" viewBox="0 0 12 12"><path d="M1 2.5H11M6 1V4.5M2.5 5H9.5V8H2.5ZM1 10.5H11"/></svg><svg class="cjg" viewBox="0 0 12 12"><path d="M1.5 4H5M3.2 1V11M1 9L5 7M6.5 1.8H11V10.5H6.5ZM6.5 6H11"/></svg></div>
<div class="a glabel" style="left:682px;top:154px;width:84px"><svg class="cjg" viewBox="0 0 12 12"><path d="M1.5 1.5H10.5V11H1.5ZM3.5 4H8.5L3.5 9M4.5 6L8.5 9"/></svg><svg class="cjg" viewBox="0 0 12 12"><path d="M1.5 4H5M3.2 1V11M1 9L5 7M6.5 1.8H11V10.5H6.5ZM6.5 6H11"/></svg></div>
<div class="a glabel" style="left:767px;top:154px;width:309px"><svg class="cjg" viewBox="0 0 12 12"><path d="M1.5 4H5M3.2 1V11M1 9L5 7M6.5 1.8H11V10.5H6.5ZM6.5 6H11"/></svg><svg class="cjg" viewBox="0 0 12 12"><path d="M1 2.5H11M6 1V4.5M2.5 5H9.5V8H2.5ZM1 10.5H11"/></svg></div>

<div id="tabs" class="a">
 <div class="a" style="left:0;top:0;width:1920px;height:3px;background:#c3d5ea"></div>
 <div class="a" style="left:26px;top:3px;width:1894px;height:26px;border:1px solid #7593b8;border-bottom:none;background:linear-gradient(180deg,#d9e5f2 0%,#dfe9f5 50%,#ebf2fa 100%)"></div>
 <svg class="a" style="left:26px;top:4px" width="200" height="25" viewBox="0 0 200 25">
  <path d="M2.5 25 L26.5 1.5 H92.5 L94.5 4 L72 25Z" fill="url(#tg1)" stroke="#1c3554" stroke-width="1"/>
  <path d="M74 25 L97.5 1.5 H169 Q172.5 1.5 172.5 5 V25Z" fill="#ffffff" stroke="#1c3554" stroke-width="1"/>
  <defs><linearGradient id="tg1" x1="0" y1="0" x2="0" y2="1"><stop offset="0" stop-color="#eef4fb"/><stop offset=".5" stop-color="#e3ecf7"/><stop offset="1" stop-color="#d5e2f0"/></linearGradient></defs>
  <path d="M154 9 L163 18 M163 9 L154 18" stroke="#7a7a7a" stroke-width="1.6"/>
 </svg>
 <div class="a" style="left:64px;top:8px;font-size:14px;color:#111"><svg class="cjg" viewBox="0 0 12 12"><path d="M1.5 4H5M3.2 1V11M1 9L5 7M6 2.5H11.5M6 6.5H11.5M6 10.5H11.5M8.7 1V11"/></svg><svg class="cjg" viewBox="0 0 12 12"><path d="M1.5 1.5H10.5V11H1.5ZM3.5 4.5H8.5M6 3V9.5M3.5 8H8.5"/></svg><svg class="cjg" viewBox="0 0 12 12"><path d="M1.5 1.5H10.5V11H1.5ZM3.5 4.5H8.5M6 3V9.5M3.5 8H8.5"/></svg></div>
 <div class="a" style="left:138px;top:8px;font-size:14px;color:#000;font-weight:bold"><svg class="cjg" viewBox="0 0 12 12"><path d="M1.5 4H5M3.2 1V11M1 9L5 7M6 2.5H11.5M6 6.5H11.5M6 10.5H11.5M8.7 1V11"/></svg><svg class="cjg" viewBox="0 0 12 12"><path d="M1.5 4H5M3.2 1V11M1 9L5 7M6.5 1.8H11V10.5H6.5ZM6.5 6H11"/></svg></div>
 <div class="dd" style="left:1902px;top:14px;border-left:5.5px solid transparent;border-right:5.5px solid transparent;border-top:6px solid #7a7a7a"></div>
</div>
<div id="leftp" class="a">
 <div class="a" style="left:0;top:7px;width:24px;height:86px;border:1px solid #8aa6c8;border-left:none;background:linear-gradient(90deg,#fdf9e6 0%,#f9ebb8 55%,#f3d47e 100%)"></div>
 <svg class="a" style="left:2px;top:9px" width="20" height="20" viewBox="0 0 20 20">
  <rect x="0" y="0" width="20" height="20" fill="#e4e0cc" opacity=".6"/>
  <path d="M2 10 Q2 5 7 5 L7 3 L10 6 L7 9 V7 Q4 7 4 10Z" fill="#111"/>
  <rect x="12" y="1" width="8" height="2.5" rx="1" fill="#777"/><rect x="14.5" y="3" width="3" height="7" fill="#777"/>
  <rect x="1" y="12" width="18" height="7" rx="2" fill="#ddd" stroke="#555" stroke-width="1.5"/>
 </svg>
 <svg class="a" style="left:4px;top:37px" width="16" height="30" viewBox="0 0 16 30">
  <rect x=".5" y=".5" width="13" height="11" fill="none" stroke="#444"/><path d="M3 9 L6 2 M6 9 L10 3 M8 8 L12 4" stroke="#555" stroke-width=".8" fill="none"/>
  <path d="M1 17 H13 M1 22 H13 M3 14 V29 M7 15 V28 M11 15 V29 M1 13 L4 14" stroke="#444" stroke-width="1.1" fill="none"/>
 </svg>
</div>
<div id="canvas" class="a"></div>
<!--DRAW-->
<svg class="a" style="left:0;top:0" width="1920" height="980" viewBox="0 0 1920 980"><defs><pattern id="hp" patternUnits="userSpaceOnUse" width="3.8" height="5" patternTransform="rotate(45)"><rect x="0" y="0" width="1" height="5" fill="#ff0000" shape-rendering="crispEdges"/></pattern></defs><g fill="none" shape-rendering="auto"><rect x="562.5" y="261.5" width="801" height="566" stroke="#00ffff" stroke-width="1" fill="none"/>
<rect x="586.5" y="271.5" width="768" height="547" stroke="#ffffff" stroke-width="1" fill="none"/>
<rect x="586.5" y="271.5" width="57" height="11" stroke="#00ffff" stroke-width="1" fill="none"/>
<path d="M662.5 261V271" stroke="#00ffff" stroke-width="1"/>
<path d="M662.5 818V827" stroke="#00ffff" stroke-width="1"/>
<path d="M762.5 261V271" stroke="#00ffff" stroke-width="1"/>
<path d="M762.5 818V827" stroke="#00ffff" stroke-width="1"/>
<path d="M862.5 261V271" stroke="#00ffff" stroke-width="1"/>
<path d="M862.5 818V827" stroke="#00ffff" stroke-width="1"/>
<path d="M962.5 261V271" stroke="#00ffff" stroke-width="1"/>
<path d="M962.5 818V827" stroke="#00ffff" stroke-width="1"/>
<path d="M1062.5 261V271" stroke="#00ffff" stroke-width="1"/>
<path d="M1062.5 818V827" stroke="#00ffff" stroke-width="1"/>
<path d="M1163.5 261V271" stroke="#00ffff" stroke-width="1"/>
<path d="M1163.5 818V827" stroke="#00ffff" stroke-width="1"/>
<path d="M1263.5 261V271" stroke="#00ffff" stroke-width="1"/>
<path d="M1263.5 818V827" stroke="#00ffff" stroke-width="1"/>
<rect x="611.5" y="264.5" width="3" height="5" stroke="#00ff00" stroke-width="1" fill="none"/>
<rect x="611.5" y="821.5" width="3" height="5" stroke="#00ff00" stroke-width="1" fill="none"/>
<rect x="711.5" y="264.5" width="3" height="5" stroke="#00ff00" stroke-width="1" fill="none"/>
<rect x="711.5" y="821.5" width="3" height="5" stroke="#00ff00" stroke-width="1" fill="none"/>
<rect x="811.5" y="264.5" width="3" height="5" stroke="#00ff00" stroke-width="1" fill="none"/>
<rect x="811.5" y="821.5" width="3" height="5" stroke="#00ff00" stroke-width="1" fill="none"/>
<rect x="911.5" y="264.5" width="3" height="5" stroke="#00ff00" stroke-width="1" fill="none"/>
<rect x="911.5" y="821.5" width="3" height="5" stroke="#00ff00" stroke-width="1" fill="none"/>
<rect x="1011.5" y="264.5" width="3" height="5" stroke="#00ff00" stroke-width="1" fill="none"/>
<rect x="1011.5" y="821.5" width="3" height="5" stroke="#00ff00" stroke-width="1" fill="none"/>
<rect x="1111.5" y="264.5" width="3" height="5" stroke="#00ff00" stroke-width="1" fill="none"/>
<rect x="1111.5" y="821.5" width="3" height="5" stroke="#00ff00" stroke-width="1" fill="none"/>
<rect x="1212.5" y="264.5" width="3" height="5" stroke="#00ff00" stroke-width="1" fill="none"/>
<rect x="1212.5" y="821.5" width="3" height="5" stroke="#00ff00" stroke-width="1" fill="none"/>
<rect x="1312.5" y="264.5" width="3" height="5" stroke="#00ff00" stroke-width="1" fill="none"/>
<rect x="1312.5" y="821.5" width="3" height="5" stroke="#00ff00" stroke-width="1" fill="none"/>
<path d="M1354 308.5H1363" stroke="#00ffff" stroke-width="1"/>
<path d="M1354 355.5H1363" stroke="#00ffff" stroke-width="1"/>
<path d="M1354 403.5H1363" stroke="#00ffff" stroke-width="1"/>
<path d="M1354 450.5H1363" stroke="#00ffff" stroke-width="1"/>
<path d="M1354 497.5H1363" stroke="#00ffff" stroke-width="1"/>
<path d="M1354 544.5H1363" stroke="#00ffff" stroke-width="1"/>
<path d="M1354 591.5H1363" stroke="#00ffff" stroke-width="1"/>
<path d="M1354 638.5H1363" stroke="#00ffff" stroke-width="1"/>
<path d="M1354 686.5H1363" stroke="#00ffff" stroke-width="1"/>
<path d="M1354 733.5H1363" stroke="#00ffff" stroke-width="1"/>
<path d="M1354 780.5H1363" stroke="#00ffff" stroke-width="1"/>
<rect x="1357.5" y="282.5" width="4" height="4" stroke="#00ff00" stroke-width="1" fill="none"/>
<rect x="1357.5" y="329.5" width="4" height="4" stroke="#00ff00" stroke-width="1" fill="none"/>
<rect x="1357.5" y="376.5" width="4" height="4" stroke="#00ff00" stroke-width="1" fill="none"/>
<rect x="1357.5" y="424.5" width="4" height="4" stroke="#00ff00" stroke-width="1" fill="none"/>
<rect x="1357.5" y="471.5" width="4" height="4" stroke="#00ff00" stroke-width="1" fill="none"/>
<rect x="1357.5" y="518.5" width="4" height="4" stroke="#00ff00" stroke-width="1" fill="none"/>
<rect x="1357.5" y="565.5" width="4" height="4" stroke="#00ff00" stroke-width="1" fill="none"/>
<rect x="1357.5" y="612.5" width="4" height="4" stroke="#00ff00" stroke-width="1" fill="none"/>
<rect x="1357.5" y="659.5" width="4" height="4" stroke="#00ff00" stroke-width="1" fill="none"/>
<rect x="1357.5" y="707.5" width="4" height="4" stroke="#00ff00" stroke-width="1" fill="none"/>
<rect x="1357.5" y="754.5" width="4" height="4" stroke="#00ff00" stroke-width="1" fill="none"/>
<rect x="1357.5" y="801.5" width="4" height="4" stroke="#00ff00" stroke-width="1" fill="none"/>
<path d="M962.5 271V276" stroke="#ffffff" stroke-width="1"/>
<path d="M962.5 818V823" stroke="#ffffff" stroke-width="1"/>
<path d="M562 544.5H592" stroke="#ffffff" stroke-width="1"/>
<path d="M1349 544.5H1363" stroke="#ffffff" stroke-width="1"/>
<path d="M562 721.5H586" stroke="#00ffff" stroke-width="1"/>
<path d="M562 727.5H586" stroke="#00ffff" stroke-width="1"/>
<path d="M562 737.5H586" stroke="#00ffff" stroke-width="1"/>
<path d="M562 743.5H586" stroke="#00ffff" stroke-width="1"/>
<path d="M562 753.5H586" stroke="#00ffff" stroke-width="1"/>
<path d="M562 760.5H586" stroke="#00ffff" stroke-width="1"/>
<path d="M562 769.5H586" stroke="#00ffff" stroke-width="1"/>
<path d="M562 776.5H586" stroke="#00ffff" stroke-width="1"/>
<path d="M562 786.5H586" stroke="#00ffff" stroke-width="1"/>
<path d="M562 792.5H586" stroke="#00ffff" stroke-width="1"/>
<path d="M562 802.5H586" stroke="#00ffff" stroke-width="1"/>
<path d="M562 808.5H586" stroke="#00ffff" stroke-width="1"/>
<rect x="566.5" y="722.5" width="19" height="4" stroke="#00ff00" stroke-width="1" fill="none"/>
<rect x="569.5" y="738.5" width="13" height="5" stroke="#00ff00" stroke-width="1" fill="none"/>
<rect x="570.5" y="754.5" width="11" height="5" stroke="#00ff00" stroke-width="1" fill="none"/>
<rect x="567.5" y="770.5" width="16" height="5" stroke="#00ff00" stroke-width="1" fill="none"/>
<rect x="570.5" y="787.5" width="11" height="4" stroke="#00ff00" stroke-width="1" fill="none"/>
<rect x="570.5" y="803.5" width="10" height="4" stroke="#00ff00" stroke-width="1" fill="none"/>
<path d="M586.5 818.5V790M586.5 790L582 798M586.5 790L591 798" stroke="#ff00ff" stroke-width="1.3" fill="none" />
<path d="M586 818.5H616M616 818.5L607.5 813M616 818.5L607.5 823.5" stroke="#ff00ff" stroke-width="1.3" fill="none" />
<circle cx="745" cy="425" r="40" stroke="#ffffff" stroke-width="1" fill="none" />
<circle cx="745" cy="425" r="31" stroke="#ffffff" stroke-width="1" fill="none" />
<circle cx="745" cy="425" r="24.5" stroke="#ffffff" stroke-width="1" fill="none" />
<path d="M778 425A33 33 0 1 0 745 458" stroke="#ff0000" fill="none"/>
<circle cx="699.5" cy="379" r="15" stroke="#ffffff" stroke-width="1" fill="none" />
<circle cx="699.5" cy="379" r="7.5" stroke="#ffffff" stroke-width="1" fill="none" />
<circle cx="791.5" cy="379" r="15" stroke="#ffffff" stroke-width="1" fill="none" />
<circle cx="791.5" cy="379" r="7.5" stroke="#ffffff" stroke-width="1" fill="none" />
<circle cx="699.5" cy="470" r="15" stroke="#ffffff" stroke-width="1" fill="none" />
<circle cx="699.5" cy="470" r="7.5" stroke="#ffffff" stroke-width="1" fill="none" />
<circle cx="791.5" cy="470" r="15" stroke="#ffffff" stroke-width="1" fill="none" />
<circle cx="791.5" cy="470" r="7.5" stroke="#ffffff" stroke-width="1" fill="none" />
<path d="M684.5 364.5H728.5V358.5H762.5V364.5H788M728.5 358.5V388M762.5 358.5V388" stroke="#ffffff" stroke-width="1" fill="none" />
<path d="M669.5 408.5H708M669.5 408.5V441.5H708M684.5 364.5V408.5M684.5 441.5V486.5H806.5V466M806.5 379V408" stroke="#ffffff" stroke-width="1" fill="none" />
<path d="M778 401Q792 399 806 408M806.5 417Q796 421 793 427Q795 432 806.5 434" stroke="#ffffff" stroke-width="1" fill="none" />
<path d="M807 434A12 12 0 0 1 807 459" stroke="#ffffff" fill="none"/>
<path d="M778 449L807 458.5" stroke="#ffffff" stroke-width="1" fill="none" />
<circle cx="796.5" cy="411.5" r="4.5" stroke="#ffffff" stroke-width="1" fill="none" />
<circle cx="796.5" cy="411.5" r="2.5" stroke="#ffffff" stroke-width="1" fill="none" />
<path d="M734 425.5H758" stroke="#00ffff" stroke-width="1"/>
<path d="M772 425.5H826" stroke="#00ffff" stroke-width="1"/>
<path d="M679 425.5H701" stroke="#00ffff" stroke-width="1"/>
<path d="M745.5 340V380" stroke="#00ffff" stroke-width="1"/>
<path d="M745.5 406V438" stroke="#00ffff" stroke-width="1"/>
<path d="M745.5 444V500" stroke="#00ffff" stroke-width="1"/>
<path d="M676 379.5H722" stroke="#00ffff" stroke-width="1"/>
<path d="M699.5 355V403" stroke="#00ffff" stroke-width="1"/>
<path d="M768 379.5H814" stroke="#00ffff" stroke-width="1"/>
<path d="M791.5 355V403" stroke="#00ffff" stroke-width="1"/>
<path d="M676 470.5H722" stroke="#00ffff" stroke-width="1"/>
<path d="M699.5 446V494" stroke="#00ffff" stroke-width="1"/>
<path d="M768 470.5H814" stroke="#00ffff" stroke-width="1"/>
<path d="M791.5 446V494" stroke="#00ffff" stroke-width="1"/>
<path d="M699.5 379L745 425" stroke="#00ffff" stroke-width="1"/>
<path d="M791.5 379L699.5 470" stroke="#00ffff" stroke-width="1"/>
<path d="M745 425L818 452" stroke="#00ffff" stroke-width="1"/>
<path d="M745 425L806 408" stroke="#00ffff" stroke-width="1"/>
<path d="M739 368H752L745.5 386Z" stroke="#ff0000" stroke-width="1" fill="#ff0000" />
<path d="M702 419V431L687 425.5Z" stroke="#ff0000" stroke-width="1" fill="#ff0000" />
<path d="M684 302.5H807" stroke="#ff0000" stroke-width="1"/>
<path d="M684.5 299V380" stroke="#ff0000" stroke-width="1"/>
<path d="M699 318.5H792" stroke="#ff0000" stroke-width="1"/>
<path d="M699.5 315V356" stroke="#ff0000" stroke-width="1"/>
<path d="M791.5 315V359" stroke="#ff0000" stroke-width="1"/>
<path d="M806.5 299V379" stroke="#ff0000" stroke-width="1"/>
<path d="M672 338.5H743" stroke="#ff0000" stroke-width="1"/>
<path d="M669.5 334V408" stroke="#ff0000" stroke-width="1"/>
<path d="M730 331.5H745.5V338" stroke="#ff0000" stroke-width="1" fill="none" />
<path d="M745.5 331V340" stroke="#ff00ff" stroke-width="1" fill="none" />
<path d="M636 364.5H699" stroke="#ff0000" stroke-width="1"/>
<path d="M639.5 364V487" stroke="#ff0000" stroke-width="1"/>
<path d="M636 486.5H699" stroke="#ff0000" stroke-width="1"/>
<path d="M651 379.5H677" stroke="#ff0000" stroke-width="1"/>
<path d="M654.5 379V471" stroke="#ff0000" stroke-width="1"/>
<path d="M651 470.5H679" stroke="#ff0000" stroke-width="1"/>
<path d="M762 358.5H853" stroke="#ff0000" stroke-width="1"/>
<path d="M849.5 358V426" stroke="#ff0000" stroke-width="1"/>
<path d="M826 425.5H853" stroke="#ff0000" stroke-width="1"/>
<path d="M806.8 408.5L839.6 399.3" stroke="#ff0000" stroke-width="1"/>
<path d="M836.8 400.7L839.6 425.4" stroke="#ff0000" stroke-width="1"/>
<path d="M849.7 428.2L843 460.2" stroke="#ff0000" stroke-width="1"/>
<path d="M818.8 452.3L846.9 461.8" stroke="#ff0000" stroke-width="1"/>
<path d="M804.8 446.7L829.5 471.4" stroke="#ff0000" stroke-width="1"/>
<path d="M859.8 454L855.3 465.2" stroke="#ff0000" stroke-width="1"/>
<path d="M812.6 489.9L802.6 500" stroke="#ff0000" stroke-width="1"/>
<path d="M807.6 431.8L778.2 516.3" stroke="#ff0000" stroke-width="1"/>
<path d="M719.4 492.5L778.2 513.6" stroke="#ff0000" stroke-width="1"/>
<path d="M719.4 496L745 426" stroke="#ff0000" stroke-width="1"/>
<path d="M658 457H683L718 483.6" stroke="#ff0000" stroke-width="1" fill="none" />
<path d="M683 508H707M683.6 507.9L705.7 457" stroke="#ff0000" stroke-width="1" fill="none" />
<path d="M621.5 412V424.5" stroke="#ff0000" stroke-width="1" fill="none" />
<path d="M621 424.5H626" stroke="#ff00ff" stroke-width="1" fill="none" />
<rect x="646.5" y="420.5" width="7" height="9" stroke="#ff0000" stroke-width="1" fill="none"/>
<rect x="740.5" y="309.5" width="10" height="8" stroke="#ff0000" stroke-width="1" fill="none"/>
<path d="M759 420.5L766 418.5" stroke="#ff00ff" stroke-width="1.5"/>
<path d="M822 402.5L828 401" stroke="#ff00ff" stroke-width="1.5"/>
<path d="M852 464L856 466" stroke="#ff00ff" stroke-width="1.5"/>
<path d="M809 488L813 490" stroke="#ff00ff" stroke-width="1.5"/>
<circle cx="745" cy="425" r="2" stroke="#ff00ff" stroke-width="1" fill="#ff00ff" />
<rect x="742.5" y="297.5" width="6" height="4" stroke="#00ff00" stroke-width="1" fill="none"/>
<rect x="743.5" y="312.5" width="4" height="3" stroke="#00ff00" stroke-width="1" fill="none"/>
<rect x="705.5" y="332.5" width="4" height="4" stroke="#00ff00" stroke-width="1" fill="none"/>
<rect x="634.5" y="421.5" width="4" height="7" stroke="#00ff00" stroke-width="1" fill="none"/>
<rect x="648.5" y="422.5" width="4" height="5" stroke="#00ff00" stroke-width="1" fill="none"/>
<rect x="669.5" y="426.5" width="3" height="3" stroke="#00ff00" stroke-width="1" fill="none"/>
<rect x="660.5" y="452.5" width="15" height="4" stroke="#00ff00" stroke-width="1" fill="none"/>
<rect x="687.5" y="503.5" width="16" height="4" stroke="#00ff00" stroke-width="1" fill="none"/>
<rect x="834.5" y="410.5" width="10" height="4" stroke="#00ff00" stroke-width="1" fill="none"/>
<rect x="842.5" y="441.5" width="11" height="4" stroke="#00ff00" stroke-width="1" fill="none"/>
<rect x="844.5" y="391.5" width="4" height="6" stroke="#00ff00" stroke-width="1" fill="none"/>
<rect x="872.5" y="399.5" width="3" height="5" stroke="#00ff00" stroke-width="1" fill="none"/>
<rect x="863.5" y="486.5" width="3" height="4" stroke="#00ff00" stroke-width="1" fill="none"/>
<rect x="798.5" y="330.5" width="2" height="4" stroke="#00ff00" stroke-width="1" fill="none"/>
<path d="M826 462L831 466L828 470L823 466Z" stroke="#00ff00" fill="none"/>
<path d="M670 818" />
<path d="M951.5 383.5H980V361.4H987.3V373.5H995.5V361.4L999 361Q1015 352 1024 348L1033.2 345.5V371.2H1045.7V395.7H1012.4L1010 399.4H967.7V394.6H951.5Z M987.5 373.5H994V411H987.5Z M994 376L1033.2 354.7V362.7L992.8 381Z" fill="url(#hp)" fill-rule="evenodd"/>
<path d="M951.5 383.5H980V361.4H987.3M995.5 361.4L999 361Q1015 352 1024 348L1033.2 345.5V371.2H1040L1041 374H1043L1044 371.2H1045.7V395.7H1036L1012.4 395.7L1010 399.4H994M987.5 399.4H967.7" stroke="#ffffff" stroke-width="1.3" fill="none" stroke-dasharray="3 1.2"/>
<path d="M987.3 373.5V411M994 373.5V411" stroke="#ffffff" stroke-width="1.3" fill="none" stroke-dasharray="3 1.2"/>
<path d="M987.3 361.4V373.5H995.5V361.4Z" stroke="#ffffff" stroke-width="2.2" fill="none" />
<path d="M994 376L1033.2 354.7M992.8 381L1033.2 362.7" stroke="#ffffff" stroke-width="1.4" fill="none" />
<path d="M1039.5 400H1047.5V409.8H1039.5Z M1039.5 438H1047.5V448H1039.5Z" fill="url(#hp)"/>
<path d="M1039.5 400.6H1047.5V409.8M1039.5 438H1047.5V448" stroke="#ffffff" stroke-width="1.2" fill="none" stroke-dasharray="3 1"/>
<path d="M951.6 448.8H1008.6V452.4H1035L1040 447H1047V455.5H1044.7V475.7H1033.7V485.5H1021.4V480.6H997V500.5H962V466.5L951.6 464.7Z M975.5 448.8H983.5V477H987.5V500.5H972.5V477H975.5Z" fill="url(#hp)" fill-rule="evenodd"/>
<path d="M951.6 453V464.7L962 466.5V500.5H972.5M987.5 500.5H997V480.6H1021.4V485.5H1033.7V475.7H1044.7V455.5L1040 452.4H1011.5M1008.6 448.8H983.5M975.5 448.8H968" stroke="#ffffff" stroke-width="1.3" fill="none" stroke-dasharray="3 1.2"/>
<path d="M975.5 448.8V477M983.5 448.8V477M972.5 477H987.5M972.5 477V500.5H987.5V477" stroke="#ffffff" stroke-width="1.5" fill="none" />
<path d="M951.5 383V465" stroke="#ffffff" stroke-width="2.5"/>
<path d="M967.5 399V449" stroke="#ffffff" stroke-width="1.5"/>
<path d="M961.5 393V439" stroke="#ffffff" stroke-width="1.2"/>
<path d="M1009.5 399V449" stroke="#ffffff" stroke-width="1.3"/>
<path d="M1011.5 396V452" stroke="#ffffff" stroke-width="1.3"/>
<path d="M1035.6 396V446Q1035.6 451 1031 452" stroke="#ffffff" stroke-width="1.3" fill="none" />
<path d="M1039.5 410V438" stroke="#ffffff" stroke-width="1.3"/>
<path d="M1047.5 396V455" stroke="#ffffff" stroke-width="1.3"/>
<circle cx="997.5" cy="435.5" r="2.5" stroke="#ffffff" stroke-width="1" fill="none" />
<path d="M951 319.5H1044" stroke="#ff0000" stroke-width="1"/>
<path d="M951.5 316V383" stroke="#ff0000" stroke-width="1"/>
<path d="M1033.5 316V345" stroke="#ff0000" stroke-width="1"/>
<path d="M954 337.5H977" stroke="#ff0000" stroke-width="1"/>
<path d="M979.5 334V361" stroke="#ff0000" stroke-width="1"/>
<path d="M991.5 338V361" stroke="#ff0000" stroke-width="1"/>
<path d="M958.5 344V372" stroke="#ff0000" stroke-width="1"/>
<path d="M955 361.5H980" stroke="#ff0000" stroke-width="1"/>
<path d="M955 373.5H987" stroke="#ff0000" stroke-width="2"/>
<path d="M968 352L978 361" stroke="#ff0000" stroke-width="1"/>
<path d="M970 367V372M968 372H971" stroke="#ff0000" stroke-width="1" fill="none" />
<rect x="988.5" y="314.5" width="8" height="4" stroke="#00ff00" stroke-width="1" fill="none"/>
<rect x="963.5" y="331.5" width="5" height="4" stroke="#00ff00" stroke-width="1" fill="none"/>
<rect x="953.5" y="347.5" width="4" height="8" stroke="#00ff00" stroke-width="1" fill="none"/>
<rect x="959.5" y="367.5" width="5" height="3" stroke="#00ff00" stroke-width="1" fill="none"/>
<rect x="966.5" y="379.5" width="12" height="4" stroke="#00ff00" stroke-width="1" fill="none"/>
<rect x="1010.5" y="332.5" width="6" height="4" stroke="#00ff00" stroke-width="1" fill="none"/>
<path d="M971 353L974 350L977 353L974 356Z" stroke="#00ff00" fill="none"/>
<path d="M1008 338.5H1023" stroke="#ff0000" stroke-width="1"/>
<path d="M1025.5 334V345" stroke="#ff0000" stroke-width="1"/>
<path d="M1000 345.5H1016" stroke="#ff0000" stroke-width="1"/>
<path d="M1036 344L1045.3 325.3" stroke="#ff0000" stroke-width="1"/>
<path d="M1045 325.5H1054" stroke="#ff0000" stroke-width="1"/>
<path d="M1048.5 320V324" stroke="#ff0000" stroke-width="1"/>
<circle cx="1036.7" cy="357" r="12.9" stroke="#ff0000" stroke-width="1" fill="none" />
<path d="M1033 371L1061.6 344.7" stroke="#ff0000" stroke-width="1"/>
<path d="M1060 345L1069.8 364.3" stroke="#ff0000" stroke-width="1"/>
<path d="M1052.6 334.3L1055 339.2" stroke="#ff0000" stroke-width="1"/>
<rect x="1047.5" y="342.5" width="13" height="3" stroke="#00ff00" stroke-width="1" fill="none"/>
<path d="M1065 353L1069 351L1074 360L1070 362Z" stroke="#00ff00" fill="none"/>
<path d="M1035 357.5H1061" stroke="#ff0000" stroke-width="1"/>
<path d="M1058.5 357V424" stroke="#ff0000" stroke-width="1"/>
<rect x="1053.5" y="371.5" width="3" height="16" stroke="#00ff00" stroke-width="1" fill="none"/>
<rect x="1067.5" y="386.5" width="7" height="4" stroke="#00ff00" stroke-width="1" fill="none"/>
<path d="M1045 394.5H1100" stroke="#ff0000" stroke-width="1"/>
<path d="M1033 400.5H1088" stroke="#ff0000" stroke-width="1"/>
<path d="M1071.5 394V403" stroke="#ff0000" stroke-width="1"/>
<path d="M1095.5 394V453" stroke="#ff0000" stroke-width="1"/>
<path d="M1084.5 403V445" stroke="#ff0000" stroke-width="1"/>
<path d="M1047 395L1073 406" stroke="#ff0000" stroke-width="1"/>
<path d="M1045 409.5H1080" stroke="#ff0000" stroke-width="1"/>
<path d="M1076.5 412V436" stroke="#ff0000" stroke-width="1"/>
<path d="M934 399.5H1000" stroke="#ff0000" stroke-width="1"/>
<path d="M961.5 393V520" stroke="#ff0000" stroke-width="1"/>
<path d="M966.5 395V521" stroke="#ff0000" stroke-width="1"/>
<path d="M979.5 383V549" stroke="#ff0000" stroke-width="1"/>
<path d="M987.5 411V448" stroke="#ff0000" stroke-width="1"/>
<path d="M991.5 411V538" stroke="#ff0000" stroke-width="1"/>
<path d="M1008.5 452V523" stroke="#ff0000" stroke-width="1"/>
<path d="M1017.5 410V449" stroke="#ff0000" stroke-width="1"/>
<path d="M1026.5 410V449" stroke="#ff0000" stroke-width="1"/>
<path d="M1039.5 455V545" stroke="#ff0000" stroke-width="1"/>
<path d="M1047.5 455V545" stroke="#ff0000" stroke-width="1"/>
<path d="M1028 420.5H1053" stroke="#ff0000" stroke-width="1"/>
<path d="M900 424.5H1066" stroke="#ff0000" stroke-width="1"/>
<path d="M1045 438.5H1080" stroke="#ff0000" stroke-width="1"/>
<path d="M1036 447.5H1088" stroke="#ff0000" stroke-width="1"/>
<path d="M1036 453.5H1100" stroke="#ff0000" stroke-width="1"/>
<path d="M954 435.5H991" stroke="#ff0000" stroke-width="1"/>
<path d="M929 448.5H1022" stroke="#ff0000" stroke-width="1"/>
<path d="M1062.7 446L1060.6 463" stroke="#ff0000" stroke-width="1"/>
<path d="M1070.5 463L1067.5 481.5" stroke="#ff0000" stroke-width="1"/>
<rect x="1012.5" y="419.5" width="4" height="9" stroke="#00ff00" stroke-width="1" fill="none"/>
<rect x="1021.5" y="419.5" width="4" height="9" stroke="#00ff00" stroke-width="1" fill="none"/>
<rect x="1070.5" y="418.5" width="4" height="11" stroke="#00ff00" stroke-width="1" fill="none"/>
<rect x="1078.5" y="418.5" width="5" height="11" stroke="#00ff00" stroke-width="1" fill="none"/>
<rect x="1090.5" y="419.5" width="4" height="9" stroke="#00ff00" stroke-width="1" fill="none"/>
<rect x="1096.5" y="459.5" width="3" height="10" stroke="#00ff00" stroke-width="1" fill="none"/>
<rect x="1057.5" y="440.5" width="8" height="3" stroke="#00ff00" stroke-width="1" fill="none"/>
<rect x="1048.5" y="414.5" width="2" height="4" stroke="#00ff00" stroke-width="1" fill="none"/>
<rect x="1025.5" y="504.5" width="4" height="3" stroke="#00ff00" stroke-width="1" fill="none"/>
<rect x="1053.5" y="513.5" width="24" height="4" stroke="#00ff00" stroke-width="1" fill="none"/>
<rect x="1003.5" y="529.5" width="21" height="4" stroke="#00ff00" stroke-width="1" fill="none"/>
<rect x="995.5" y="538.5" width="22" height="4" stroke="#00ff00" stroke-width="1" fill="none"/>
<rect x="983.5" y="550.5" width="24" height="4" stroke="#00ff00" stroke-width="1" fill="none"/>
<rect x="996.5" y="565.5" width="7" height="4" stroke="#00ff00" stroke-width="1" fill="none"/>
<rect x="1016.5" y="404.5" width="4" height="8" stroke="#00ff00" stroke-width="1" fill="none"/>
<rect x="1000.5" y="391.5" width="5" height="3" stroke="#00ff00" stroke-width="1" fill="none"/>
<rect x="980.5" y="427.5" width="2" height="4" stroke="#00ff00" stroke-width="1" fill="none"/>
<path d="M1062 468L1066 467L1067 477L1063 478Z" stroke="#00ff00" fill="none"/>
<path d="M1008 518.5H1085" stroke="#ff0000" stroke-width="1"/>
<path d="M1021.5 485V513" stroke="#ff0000" stroke-width="1"/>
<path d="M1033.5 485V513" stroke="#ff0000" stroke-width="1"/>
<path d="M991 533.5H1039" stroke="#ff0000" stroke-width="1"/>
<path d="M982 545.5H1039" stroke="#ff0000" stroke-width="1"/>
<path d="M954 556.5H1036" stroke="#ff0000" stroke-width="1"/>
<path d="M951 568.5H1047" stroke="#ff0000" stroke-width="1"/>
<path d="M951.5 465V574" stroke="#ff0000" stroke-width="1"/>
<path d="M1046.5 455V574" stroke="#ff0000" stroke-width="1"/>
<path d="M889 383.5H951" stroke="#ff0000" stroke-width="1"/>
<path d="M917 383.5H951" stroke="#ff0000" stroke-width="2"/>
<path d="M902 387.5H951" stroke="#ff0000" stroke-width="1"/>
<path d="M921 392.5H951" stroke="#ff0000" stroke-width="1"/>
<path d="M893.5 386V462" stroke="#ff0000" stroke-width="1"/>
<path d="M905.5 388V461" stroke="#ff0000" stroke-width="1"/>
<path d="M924.5 392V453" stroke="#ff0000" stroke-width="1"/>
<path d="M938.5 402V446" stroke="#ff0000" stroke-width="1"/>
<path d="M929 448.5H960" stroke="#ff0000" stroke-width="1"/>
<path d="M921 455.5H951" stroke="#ff0000" stroke-width="1"/>
<path d="M902 460.5H951" stroke="#ff0000" stroke-width="1"/>
<path d="M889 464.5H951" stroke="#ff0000" stroke-width="1"/>
<rect x="887.5" y="419.5" width="5" height="9" stroke="#00ff00" stroke-width="1" fill="none"/>
<rect x="900.5" y="423.5" width="4" height="8" stroke="#00ff00" stroke-width="1" fill="none"/>
<rect x="919.5" y="418.5" width="4" height="11" stroke="#00ff00" stroke-width="1" fill="none"/>
<rect x="932.5" y="418.5" width="4" height="11" stroke="#00ff00" stroke-width="1" fill="none"/>
<rect x="936.5" y="470.5" width="10" height="4" stroke="#00ff00" stroke-width="1" fill="none"/>
<rect x="902.5" y="467.5" width="2" height="4" stroke="#00ff00" stroke-width="1" fill="none"/>
<rect x="907.5" y="487.5" width="4" height="4" stroke="#00ff00" stroke-width="1" fill="none"/>
<rect x="918.5" y="489.5" width="5" height="5" stroke="#00ff00" stroke-width="1" fill="none"/>
<rect x="936.5" y="488.5" width="9" height="4" stroke="#00ff00" stroke-width="1" fill="none"/>
<rect x="955.5" y="511.5" width="8" height="4" stroke="#00ff00" stroke-width="1" fill="none"/>
<rect x="939.5" y="520.5" width="24" height="4" stroke="#00ff00" stroke-width="1" fill="none"/>
<rect x="997.5" y="535.5" width="0" height="0" stroke="#00ff00" stroke-width="1" fill="none"/>
<path d="M934 469L951 459" stroke="#ff0000" stroke-width="1"/>
<path d="M942 384L951 392" stroke="#ff0000" stroke-width="1"/>
<path d="M909 478.5H962" stroke="#ff0000" stroke-width="1"/>
<path d="M912.5 478V500" stroke="#ff0000" stroke-width="1"/>
<path d="M909 500.5H962" stroke="#ff0000" stroke-width="1"/>
<path d="M920 483.5H962" stroke="#ff0000" stroke-width="1"/>
<path d="M924.5 486V497" stroke="#ff0000" stroke-width="1"/>
<path d="M933 493.5H962" stroke="#ff0000" stroke-width="1"/>
<path d="M954 517.5H964" stroke="#ff0000" stroke-width="1"/>
<path d="M966.5 500V520" stroke="#ff0000" stroke-width="1"/>
<path d="M933 526.5H972" stroke="#ff0000" stroke-width="1"/>
<path d="M972.5 500V530" stroke="#ff0000" stroke-width="1"/>
<path d="M975 526.5H984" stroke="#ff0000" stroke-width="1"/>
<path d="M987.5 500V530" stroke="#ff0000" stroke-width="1"/>
<rect x="979" y="519" width="1.5" height="1.5" fill="#fff"/>
<rect x="1004.5" y="296.5" width="19" height="4" stroke="#ffffff" stroke-width="1" fill="none"/>
<g transform="translate(1129 310) scale(0.78)"><path d="M1 3H5M3 0V11M0 8L5 6M6 2H11M8.5 0V5M6 5H11L6 11M7 7L11 11" stroke="#fff" stroke-width="1.1" fill="none"/></g>
<g transform="translate(1138.5 310) scale(0.78)"><path d="M0 4H11M5.5 0V11M5.5 4L0 10M5.5 4L11 10M8 1L9 2" stroke="#fff" stroke-width="1.1" fill="none"/></g>
<g transform="translate(1148 310) scale(0.78)"><path d="M0 1H11M1 3H10V6H1ZM4 1V6M7 1V6M0 8H11M3 8L8 11M8 8L3 11" stroke="#fff" stroke-width="1.1" fill="none"/></g>
<g transform="translate(1157.5 310) scale(0.78)"><path d="M0 3H11M5.5 0V11M3 5L1 8M8 5L11 9M5.5 6L9 4" stroke="#fff" stroke-width="1.1" fill="none"/></g>
<rect x="1129" y="325" width="1" height="6" fill="#fff"/>
<rect x="1133" y="325" width="1" height="6" fill="#fff"/>
<rect x="1143" y="325" width="1" height="6" fill="#fff"/>
<rect x="1148" y="325" width="1" height="6" fill="#fff"/>
<rect x="1150" y="329" width="1" height="2" fill="#fff"/>
<rect x="1152" y="325" width="1" height="6" fill="#fff"/>
<rect x="1154" y="329" width="1" height="2" fill="#fff"/>
<rect x="1157" y="325" width="1" height="6" fill="#fff"/>
<rect x="1159" y="329" width="1" height="2" fill="#fff"/>
<rect x="1167" y="325" width="1" height="6" fill="#fff"/>
<rect x="1171" y="325" width="1" height="6" fill="#fff"/>
<rect x="1172" y="325" width="1" height="6" fill="#fff"/>
<rect x="1176" y="325" width="1" height="6" fill="#fff"/>
<rect x="1181" y="325" width="1" height="6" fill="#fff"/>
<rect x="1186" y="325" width="1" height="6" fill="#fff"/>
<rect x="1195" y="325" width="1" height="6" fill="#fff"/>
<rect x="1200" y="325" width="1" height="6" fill="#fff"/>
<rect x="1201" y="325" width="1" height="6" fill="#fff"/>
<rect x="1205" y="325" width="1" height="6" fill="#fff"/>
<rect x="1209" y="325" width="1" height="6" fill="#fff"/>
<rect x="1129" y="335" width="1" height="6" fill="#fff"/>
<rect x="1133" y="335" width="1" height="6" fill="#fff"/>
<rect x="1143" y="335" width="1" height="6" fill="#fff"/>
<rect x="1145" y="339" width="1" height="2" fill="#fff"/>
<rect x="1148" y="335" width="1" height="6" fill="#fff"/>
<rect x="1152" y="335" width="1" height="6" fill="#fff"/>
<rect x="1157" y="335" width="1" height="6" fill="#fff"/>
<rect x="1162" y="335" width="1" height="6" fill="#fff"/>
<rect x="1166" y="335" width="1" height="6" fill="#fff"/>
<rect x="1171" y="335" width="1" height="6" fill="#fff"/>
<rect x="1176" y="335" width="1" height="6" fill="#fff"/>
<rect x="1181" y="335" width="1" height="6" fill="#fff"/>
<rect x="1185" y="335" width="1" height="6" fill="#fff"/>
<rect x="1190" y="335" width="1" height="6" fill="#fff"/>
<rect x="1191" y="335" width="1" height="6" fill="#fff"/>
<rect x="1195" y="335" width="1" height="6" fill="#fff"/>
<rect x="1197" y="339" width="1" height="2" fill="#fff"/>
<rect x="1199" y="335" width="1" height="6" fill="#fff"/>
<rect x="1204" y="335" width="1" height="6" fill="#fff"/>
<rect x="1209" y="335" width="1" height="6" fill="#fff"/>
<rect x="1213" y="335" width="1" height="6" fill="#fff"/>
<rect x="1218" y="335" width="1" height="6" fill="#fff"/>
<rect x="1223" y="335" width="1" height="6" fill="#fff"/>
<rect x="1228" y="335" width="1" height="6" fill="#fff"/>
<rect x="1230" y="339" width="1" height="2" fill="#fff"/>
<rect x="1232" y="335" width="1" height="6" fill="#fff"/>
<rect x="1237" y="335" width="1" height="6" fill="#fff"/>
<rect x="1242" y="335" width="1" height="6" fill="#fff"/>
<rect x="1129" y="345" width="1" height="6" fill="#fff"/>
<rect x="1131" y="349" width="1" height="2" fill="#fff"/>
<rect x="1133" y="345" width="1" height="6" fill="#fff"/>
<rect x="1134" y="345" width="1" height="6" fill="#fff"/>
<rect x="1138" y="345" width="1" height="6" fill="#fff"/>
<rect x="1140" y="349" width="1" height="2" fill="#fff"/>
<rect x="1143" y="345" width="1" height="6" fill="#fff"/>
<rect x="1144" y="345" width="1" height="6" fill="#fff"/>
<rect x="1147" y="345" width="1" height="6" fill="#fff"/>
<rect x="1152" y="345" width="1" height="6" fill="#fff"/>
<rect x="1154" y="349" width="1" height="2" fill="#fff"/>
<rect x="1157" y="345" width="1" height="6" fill="#fff"/>
<rect x="1161" y="345" width="1" height="6" fill="#fff"/>
<rect x="1166" y="345" width="1" height="6" fill="#fff"/>
<rect x="1171" y="345" width="1" height="6" fill="#fff"/>
<rect x="1176" y="345" width="1" height="6" fill="#fff"/>
<rect x="1180" y="345" width="1" height="6" fill="#fff"/>
<rect x="1181" y="345" width="1" height="6" fill="#fff"/>
<rect x="1185" y="345" width="1" height="6" fill="#fff"/>
<rect x="1190" y="345" width="1" height="6" fill="#fff"/>
<rect x="1194" y="345" width="1" height="6" fill="#fff"/>
<rect x="1196" y="349" width="1" height="2" fill="#fff"/>
<rect x="1199" y="345" width="1" height="6" fill="#fff"/>
<rect x="1204" y="345" width="1" height="6" fill="#fff"/>
<rect x="1208" y="345" width="1" height="6" fill="#fff"/>
<rect x="1213" y="345" width="1" height="6" fill="#fff"/>
<rect x="1218" y="345" width="1" height="6" fill="#fff"/>
<rect x="1223" y="345" width="1" height="6" fill="#fff"/>
<rect x="1129" y="355" width="1" height="6" fill="#fff"/>
<rect x="1133" y="355" width="1" height="6" fill="#fff"/>
<rect x="1134" y="355" width="1" height="6" fill="#fff"/>
<rect x="1138" y="355" width="1" height="6" fill="#fff"/>
<rect x="1140" y="359" width="1" height="2" fill="#fff"/>
<rect x="1148" y="355" width="1" height="6" fill="#fff"/>
<rect x="1152" y="355" width="1" height="6" fill="#fff"/>
<rect x="1162" y="355" width="1" height="6" fill="#fff"/>
<rect x="1164" y="359" width="1" height="2" fill="#fff"/>
<rect x="1167" y="355" width="1" height="6" fill="#fff"/>
<rect x="1168" y="355" width="1" height="6" fill="#fff"/>
<rect x="1171" y="355" width="1" height="6" fill="#fff"/>
<rect x="1173" y="359" width="1" height="2" fill="#fff"/>
<rect x="1176" y="355" width="1" height="6" fill="#fff"/>
<rect x="1181" y="355" width="1" height="6" fill="#fff"/>
<rect x="1186" y="355" width="1" height="6" fill="#fff"/>
<rect x="1190" y="355" width="1" height="6" fill="#fff"/>
<rect x="1195" y="355" width="1" height="6" fill="#fff"/>
<rect x="1129" y="365" width="1" height="6" fill="#fff"/>
<rect x="1131" y="369" width="1" height="2" fill="#fff"/>
<rect x="1133" y="365" width="1" height="6" fill="#fff"/>
<rect x="1138" y="365" width="1" height="6" fill="#fff"/>
<rect x="1143" y="365" width="1" height="6" fill="#fff"/>
<rect x="1145" y="369" width="1" height="2" fill="#fff"/>
<rect x="1147" y="365" width="1" height="6" fill="#fff"/>
<rect x="1152" y="365" width="1" height="6" fill="#fff"/>
<rect x="1129" y="374" width="1" height="6" fill="#fff"/>
<rect x="1133" y="374" width="1" height="6" fill="#fff"/>
<rect x="1138" y="374" width="1" height="6" fill="#fff"/>
<rect x="1143" y="374" width="1" height="6" fill="#fff"/>
<rect x="1144" y="374" width="1" height="6" fill="#fff"/>
<rect x="1147" y="374" width="1" height="6" fill="#fff"/>
<rect x="1152" y="374" width="1" height="6" fill="#fff"/>
<rect x="1157" y="374" width="1" height="6" fill="#fff"/>
<rect x="1161" y="374" width="1" height="6" fill="#fff"/>
<rect x="1166" y="374" width="1" height="6" fill="#fff"/>
<rect x="1171" y="374" width="1" height="6" fill="#fff"/>
<rect x="1176" y="374" width="1" height="6" fill="#fff"/>
<rect x="1185" y="374" width="1" height="6" fill="#fff"/>
<rect x="1187" y="378" width="1" height="2" fill="#fff"/>
<rect x="1190" y="374" width="1" height="6" fill="#fff"/>
<rect x="1195" y="374" width="1" height="6" fill="#fff"/>
<rect x="1199" y="374" width="1" height="6" fill="#fff"/>
<rect x="1204" y="374" width="1" height="6" fill="#fff"/>
<rect x="1209" y="374" width="1" height="6" fill="#fff"/>
<rect x="1213" y="374" width="1" height="6" fill="#fff"/>
<rect x="1218" y="374" width="1" height="6" fill="#fff"/>
<rect x="1223" y="374" width="1" height="6" fill="#fff"/>
<rect x="1228" y="374" width="1" height="6" fill="#fff"/>
<rect x="1232" y="374" width="1" height="6" fill="#fff"/>
<rect x="1234" y="378" width="1" height="2" fill="#fff"/>
<rect x="1237" y="374" width="1" height="6" fill="#fff"/>
<rect x="1242" y="374" width="1" height="6" fill="#fff"/>
<rect x="1246" y="374" width="1" height="6" fill="#fff"/>
<rect x="1247" y="374" width="1" height="6" fill="#fff"/>
<rect x="1251" y="374" width="1" height="6" fill="#fff"/>
<rect x="1256" y="374" width="1" height="6" fill="#fff"/>
<rect x="1260" y="374" width="1" height="6" fill="#fff"/>
<rect x="1265" y="374" width="1" height="6" fill="#fff"/>
<rect x="1270" y="374" width="1" height="6" fill="#fff"/>
<rect x="1271" y="374" width="1" height="6" fill="#fff"/>
<rect x="1275" y="374" width="1" height="6" fill="#fff"/>
<rect x="1279" y="374" width="1" height="6" fill="#fff"/>
<rect x="1280" y="374" width="1" height="6" fill="#fff"/>
<rect x="1284" y="374" width="1" height="6" fill="#fff"/>
<rect x="1129" y="384" width="1" height="6" fill="#fff"/>
<rect x="1133" y="384" width="1" height="6" fill="#fff"/>
<rect x="1134" y="384" width="1" height="6" fill="#fff"/>
<rect x="1143" y="384" width="1" height="6" fill="#fff"/>
<rect x="1148" y="384" width="1" height="6" fill="#fff"/>
<rect x="1152" y="384" width="1" height="6" fill="#fff"/>
<rect x="1157" y="384" width="1" height="6" fill="#fff"/>
<rect x="1162" y="384" width="1" height="6" fill="#fff"/>
<rect x="1166" y="384" width="1" height="6" fill="#fff"/>
<rect x="1171" y="384" width="1" height="6" fill="#fff"/>
<rect x="1176" y="384" width="1" height="6" fill="#fff"/>
<rect x="1177" y="384" width="1" height="6" fill="#fff"/>
<rect x="1181" y="384" width="1" height="6" fill="#fff"/>
<rect x="1185" y="384" width="1" height="6" fill="#fff"/>
<rect x="1190" y="384" width="1" height="6" fill="#fff"/>
<rect x="1195" y="384" width="1" height="6" fill="#fff"/>
<rect x="1199" y="384" width="1" height="6" fill="#fff"/>
<rect x="1209" y="384" width="1" height="6" fill="#fff"/>
<rect x="1214" y="384" width="1" height="6" fill="#fff"/>
<rect x="1216" y="388" width="1" height="2" fill="#fff"/>
<rect x="1218" y="384" width="1" height="6" fill="#fff"/>
<rect x="1219" y="384" width="1" height="6" fill="#fff"/>
<rect x="1223" y="384" width="1" height="6" fill="#fff"/>
<rect x="1228" y="384" width="1" height="6" fill="#fff"/>
<rect x="1233" y="384" width="1" height="6" fill="#fff"/>
<rect x="1237" y="384" width="1" height="6" fill="#fff"/>
<rect x="1238" y="384" width="1" height="6" fill="#fff"/>
<rect x="1242" y="384" width="1" height="6" fill="#fff"/>
<rect x="1247" y="384" width="1" height="6" fill="#fff"/>
<rect x="1251" y="384" width="1" height="6" fill="#fff"/>
<rect x="1256" y="384" width="1" height="6" fill="#fff"/>
<rect x="1261" y="384" width="1" height="6" fill="#fff"/>
<rect x="1265" y="384" width="1" height="6" fill="#fff"/>
<rect x="1270" y="384" width="1" height="6" fill="#fff"/>
<rect x="1275" y="384" width="1" height="6" fill="#fff"/>
<rect x="1280" y="384" width="1" height="6" fill="#fff"/>
<rect x="1284" y="384" width="1" height="6" fill="#fff"/>
<rect x="1289" y="384" width="1" height="6" fill="#fff"/>
<rect x="1294" y="384" width="1" height="6" fill="#fff"/>
<rect x="1129" y="394" width="1" height="6" fill="#fff"/>
<rect x="1130" y="394" width="1" height="6" fill="#fff"/>
<rect x="1133" y="394" width="1" height="6" fill="#fff"/>
<rect x="1135" y="398" width="1" height="2" fill="#fff"/>
<rect x="1138" y="394" width="1" height="6" fill="#fff"/>
<rect x="1140" y="398" width="1" height="2" fill="#fff"/>
<rect x="1143" y="394" width="1" height="6" fill="#fff"/>
<rect x="1147" y="394" width="1" height="6" fill="#fff"/>
<rect x="1148" y="394" width="1" height="6" fill="#fff"/>
<rect x="1129" y="404" width="1" height="6" fill="#fff"/>
<rect x="1133" y="404" width="1" height="6" fill="#fff"/>
<rect x="1138" y="404" width="1" height="6" fill="#fff"/>
<rect x="1143" y="404" width="1" height="6" fill="#fff"/>
<rect x="1147" y="404" width="1" height="6" fill="#fff"/>
<rect x="1152" y="404" width="1" height="6" fill="#fff"/>
<rect x="1153" y="404" width="1" height="6" fill="#fff"/>
<rect x="1157" y="404" width="1" height="6" fill="#fff"/>
<rect x="1161" y="404" width="1" height="6" fill="#fff"/>
<rect x="1166" y="404" width="1" height="6" fill="#fff"/>
<rect x="1176" y="404" width="1" height="6" fill="#fff"/>
<rect x="1181" y="404" width="1" height="6" fill="#fff"/>
<rect x="1183" y="408" width="1" height="2" fill="#fff"/>
<rect x="1185" y="404" width="1" height="6" fill="#fff"/>
<rect x="1190" y="404" width="1" height="6" fill="#fff"/>
<rect x="1192" y="408" width="1" height="2" fill="#fff"/>
<clipPath id="cl1"><circle cx="1198.3" cy="492.6" r="40"/></clipPath>
<g clip-path="url(#cl1)"><path d="M1150 455.7H1200V520H1214.3V527H1240V540H1150Z M1150 495.7L1198.6 485.7V501.4L1150 510Z" fill="url(#hp)" fill-rule="evenodd"/></g>
<circle cx="1198.3" cy="492.6" r="40" stroke="#ff0000" stroke-width="1" fill="none" />
<path d="M1178.6 456H1200.5V520H1214.3V527" stroke="#ffffff" stroke-width="1.2" fill="none" stroke-dasharray="3 1"/>
<path d="M1158.6 495.7L1198.6 485.7M1158.6 510L1198.6 501.4" stroke="#ffffff" stroke-width="1.2" fill="none" />
<path d="M1200.5 455V533" stroke="#ffffff" stroke-width="1.5"/>
<path d="M1200 473.5H1262" stroke="#ff0000" stroke-width="1"/>
<path d="M1200 511.5H1262" stroke="#ff0000" stroke-width="1"/>
<path d="M1258.5 473V511" stroke="#ff0000" stroke-width="1"/>
<rect x="1253.5" y="485.5" width="4" height="13" stroke="#00ff00" stroke-width="1" fill="none"/>
<path d="M1151.4 504.9L1204.3 492.3" stroke="#ff0000" stroke-width="1"/>
<path d="M1188 444.5H1210" stroke="#ffffff" stroke-width="1"/>
<rect x="1193.5" y="445.5" width="9" height="6" stroke="#ffffff" stroke-width="1" fill="none"/>
<path d="M1197.5 437V444" stroke="#ffffff" stroke-width="1"/>
<path d="M1198.5 533V551" stroke="#ffffff" stroke-width="1"/>
<path d="M1202.5 533V551" stroke="#ffffff" stroke-width="1"/>
<path d="M1191 549.5H1222" stroke="#ff0000" stroke-width="1"/>
<rect x="1211.5" y="541.5" width="7" height="5" stroke="#00ff00" stroke-width="1" fill="none"/>
<path d="M1094 504.5H1142" stroke="#ffffff" stroke-width="1"/>
<path d="M1118.5 480V527" stroke="#ffffff" stroke-width="1"/>
<rect x="1113.5" y="499.5" width="10" height="10" stroke="#00ff00" stroke-width="1" fill="none"/>
<path d="M679.5 637.2H710.4V609.4H745.3V617H761.6V626.6H773.8V648.9H776V664.8H767.5V693H776V720.6H761.8V758.3H748.5V720.6H679.5Z M748.5 736.6H761.8V750.5H748.5Z M679.8 648.9H695.7V654.4H736.8V650.7H764.3V707H736.8V703.4H695.7V709H679.8Z M722 609.4H736V627.4L732.4 631.7V654.4H725V631.7L722 627.4Z" fill="url(#hp)" fill-rule="evenodd"/>
<path d="M679.5 720.6V637.2H710.4V609.4H722M736 609.4H745.3V617H761.6V626.6H773.8V648.9H776V664.8M776 693V720.6H761M751 720.6H679.5" stroke="#ffffff" stroke-width="1.3" fill="none" stroke-dasharray="3 1.2"/>
<path d="M722 609.4H736V627.4L732.4 631.7V654.4M725 654.4V631.7L722 627.4V609.4M722 624H736" stroke="#ffffff" stroke-width="1.3" fill="none" />
<path d="M679.8 648.9V708.3H690.2V648.9Z M695.7 647.7V709 M695.7 654.4H736.8 M695.7 703.4H736.8 M737 650V707" stroke="#ffffff" stroke-width="1.3" fill="none" />
<path d="M742.3 650.7H761.8Q764.3 650.7 764.3 653.2V704.5Q764.3 707 761.8 707H742.3Q739.8 707 739.8 704.5V653.2Q739.8 650.7 742.3 650.7Z" stroke="#ffffff" stroke-width="1.3" fill="none" />
<path d="M767.5 664.8H776V693H767.5Z" stroke="#ffffff" stroke-width="1.2" fill="none" />
<path d="M748.5 720.6V758.3H761.8V720.6M748.5 736.6H761.8M748.5 750.5H761.8" stroke="#ffffff" stroke-width="1.3" fill="none" stroke-dasharray="3 1.2"/>
<circle cx="725.3" cy="667.5" r="2.3" stroke="#ffffff" stroke-width="1" fill="none" />
<rect x="740.5" y="557.5" width="20" height="5" stroke="#ffffff" stroke-width="1" fill="none"/>
<path d="M650 647.5H689" stroke="#ff0000" stroke-width="1"/>
<path d="M650 709.5H689" stroke="#ff0000" stroke-width="1"/>
<path d="M653.5 651V706" stroke="#ff0000" stroke-width="1"/>
<rect x="647.5" y="668.5" width="5" height="22" stroke="#00ff00" stroke-width="1" fill="none"/>
<path d="M674 678.5H787" stroke="#ff0000" stroke-width="1"/>
<path d="M790.5 629V728" stroke="#ff0000" stroke-width="1"/>
<path d="M770 629.5H823" stroke="#ff0000" stroke-width="1"/>
<path d="M770 728.5H823" stroke="#ff0000" stroke-width="1"/>
<path d="M820.5 626V753" stroke="#ff0000" stroke-width="1"/>
<rect x="785.5" y="672.5" width="4" height="13" stroke="#00ff00" stroke-width="1" fill="none"/>
<rect x="814.5" y="674.5" width="4" height="10" stroke="#00ff00" stroke-width="1" fill="none"/>
<path d="M721.5 578V632" stroke="#ff0000" stroke-width="1"/>
<path d="M736.5 578V615" stroke="#ff0000" stroke-width="1"/>
<path d="M724 581.5H775" stroke="#ff0000" stroke-width="1"/>
<path d="M731 594.5H808" stroke="#ff0000" stroke-width="1"/>
<path d="M713 603.5H787" stroke="#ff0000" stroke-width="1"/>
<rect x="746.5" y="577.5" width="23" height="4" stroke="#00ff00" stroke-width="1" fill="none"/>
<rect x="779.5" y="588.5" width="24" height="4" stroke="#00ff00" stroke-width="1" fill="none"/>
<rect x="776.5" y="597.5" width="8" height="4" stroke="#00ff00" stroke-width="1" fill="none"/>
<rect x="689.5" y="619.5" width="3" height="5" stroke="#00ff00" stroke-width="1" fill="none"/>
<rect x="698.5" y="617.5" width="3" height="5" stroke="#00ff00" stroke-width="1" fill="none"/>
<path d="M767.5 593V626" stroke="#ff0000" stroke-width="1"/>
<path d="M712.5 599V626" stroke="#ff0000" stroke-width="1"/>
<path d="M694.5 609V632" stroke="#ff0000" stroke-width="1"/>
<path d="M745.5 606V615" stroke="#ff0000" stroke-width="1"/>
<path d="M690 609.5H720" stroke="#ff0000" stroke-width="1"/>
<path d="M690 625.5H734" stroke="#ff0000" stroke-width="1"/>
<path d="M740 743.5H765" stroke="#ff0000" stroke-width="1"/>
<path d="M748.5 750V780" stroke="#ff0000" stroke-width="1"/>
<path d="M761.5 750V780" stroke="#ff0000" stroke-width="1"/>
<path d="M748 775.5H762" stroke="#ff0000" stroke-width="1"/>
<rect x="753.5" y="770.5" width="4" height="4" stroke="#00ff00" stroke-width="1" fill="none"/>
<path d="M762 728.5H794" stroke="#ff0000" stroke-width="1"/>
<path d="M762 731.5H810" stroke="#ff0000" stroke-width="1"/>
<circle cx="767.5" cy="729.4" r="8" stroke="#ff0000" stroke-width="1" fill="none" />
<path d="M772 736L783.5 761H794" stroke="#ff0000" stroke-width="1" fill="none" />
<rect x="785.5" y="766.5" width="2" height="2" stroke="#ffffff" stroke-width="1" fill="none"/>
<clipPath id="cl2"><circle cx="958.2" cy="703.5" r="24.5"/></clipPath>
<g clip-path="url(#cl2)"><path d="M939.5 697.4H952V705.3H966.6V697.4H974.8V730H939.5Z" fill="url(#hp)"/></g>
<circle cx="958.2" cy="703.5" r="24.5" stroke="#ff0000" stroke-width="1" fill="none" />
<path d="M939.5 686V697.4H952M966.6 697.4H974.8V720M952 705.3H966.6" stroke="#ffffff" stroke-width="1.2" fill="none" stroke-dasharray="3 1"/>
<path d="M939.5 697V761" stroke="#ff0000" stroke-width="1"/>
<path d="M952.5 697V752" stroke="#ff0000" stroke-width="1"/>
<path d="M966.5 697V742" stroke="#ff0000" stroke-width="1"/>
<path d="M974.5 720V761" stroke="#ff0000" stroke-width="1"/>
<path d="M945 738.5H949" stroke="#ff0000" stroke-width="1"/>
<path d="M969 738.5H994" stroke="#ff0000" stroke-width="1"/>
<path d="M933 748.5H992" stroke="#ff0000" stroke-width="1"/>
<path d="M939 756.5H975" stroke="#ff0000" stroke-width="1"/>
<rect x="985.5" y="732.5" width="6" height="4" stroke="#00ff00" stroke-width="1" fill="none"/>
<rect x="983.5" y="743.5" width="7" height="4" stroke="#00ff00" stroke-width="1" fill="none"/>
<rect x="954.5" y="751.5" width="5" height="4" stroke="#00ff00" stroke-width="1" fill="none"/>
<path d="M952.5 697L1006.7 667.5" stroke="#ff0000" stroke-width="1"/>
<path d="M1006 669.5H1033" stroke="#ff0000" stroke-width="1"/>
<path d="M966 697L1006 667" stroke="#ff0000" stroke-width="1"/>
<path d="M953 705L1018.5 722" stroke="#ff0000" stroke-width="1"/>
<path d="M1018 722.5H1067" stroke="#ff0000" stroke-width="1"/>
<rect x="1055.5" y="664.5" width="17" height="4" stroke="#00ff00" stroke-width="1" fill="none"/>
<rect x="1090.5" y="718.5" width="17" height="3" stroke="#00ff00" stroke-width="1" fill="none"/>
<path d="M948 670.5H968" stroke="#ffffff" stroke-width="1"/>
<rect x="954.5" y="671.5" width="9" height="4" stroke="#ffffff" stroke-width="1" fill="none"/>
<rect x="956.5" y="665.5" width="2" height="3" stroke="#ffffff" stroke-width="1" fill="none"/>
<path d="M1180.3 644.6H1210.2L1211.5 634L1213.5 627.3L1214.2 620.7H1262.6V633.3H1274.5V656.5H1276.5V671.1H1269.9L1268.5 662.5L1264.6 657.8H1240V659.8H1196.9V653.2H1180.3Z M1213 629L1263 641L1262 651L1211 642Z" fill="url(#hp)" fill-rule="evenodd"/>
<path d="M1180.3 656V644.6H1210.2L1211.5 634L1213.5 627.3L1214.2 620.7H1262.6V633.3H1274.5V656.5H1276.5V671.1H1269.9L1268.5 662.5L1264.6 657.8H1240V659.8H1196.9V653.2H1190" stroke="#ffffff" stroke-width="1.3" fill="none" stroke-dasharray="3 1.2"/>
<path d="M1213 629L1263 641M1211 642L1262 651" stroke="#ffffff" stroke-width="1.3" fill="none" stroke-dasharray="3 1.2"/>
<path d="M1127 685.5H1306" stroke="#ff0000" stroke-width="1"/>
<path d="M1180.5 645V685" stroke="#ffffff" stroke-width="1.3"/>
<path d="M1190.5 653V685" stroke="#ffffff" stroke-width="1.3"/>
<path d="M1196.5 659V685" stroke="#ffffff" stroke-width="1.3"/>
<path d="M1237.5 659V685" stroke="#ffffff" stroke-width="1.3"/>
<path d="M1240.5 659V685" stroke="#ffffff" stroke-width="1.3"/>
<path d="M1264.5 658V685" stroke="#ffffff" stroke-width="1.3"/>
<path d="M1267.5 662V685" stroke="#ffffff" stroke-width="1.3"/>
<path d="M1269.5 671V685" stroke="#ffffff" stroke-width="1.3"/>
<path d="M1276.5 671V685" stroke="#ffffff" stroke-width="1.3"/>
<path d="M1135.3 614.3L1305.7 648.3" stroke="#ff0000" stroke-width="1"/>
<path d="M1168.4 615.1L1298.4 659.4" stroke="#ff0000" stroke-width="1"/>
<path d="M1165 628.4L1298 659" stroke="#ff0000" stroke-width="1"/>
<path d="M1161 633.5H1213" stroke="#ff0000" stroke-width="1"/>
<path d="M1164.5 633V685" stroke="#ff0000" stroke-width="1"/>
<rect x="1159.5" y="654.5" width="4" height="10" stroke="#00ff00" stroke-width="1" fill="none"/>
<path d="M1138.6 617.4L1130 685.4" stroke="#ff0000" stroke-width="1"/>
<rect x="1128.5" y="646.5" width="9" height="4" stroke="#00ff00" stroke-width="1" fill="none"/>
<path d="M1180.3 578.3L1168.4 628.7" stroke="#ff0000" stroke-width="1"/>
<path d="M1175 582L1178 583L1172 607L1169 606Z" stroke="#00ff00" fill="none"/>
<path d="M1223.4 590.2L1281.8 604.5" stroke="#ff0000" stroke-width="1"/>
<path d="M1285.8 602.1L1275.8 644.6" stroke="#ff0000" stroke-width="1"/>
<path d="M1223.4 590.2L1213.5 627.3" stroke="#ff0000" stroke-width="1"/>
<path d="M1223.4 587L1223.4 590" stroke="#ff0000" stroke-width="1"/>
<path d="M1220.8 599.2L1241.4 604.5" stroke="#ff0000" stroke-width="1"/>
<path d="M1220.1 607.2L1236 610.8" stroke="#ff0000" stroke-width="1"/>
<path d="M1244.7 601.1L1235.4 644.6" stroke="#ff0000" stroke-width="1"/>
<path d="M1238.7 607.2L1233.4 628.7" stroke="#ff0000" stroke-width="1"/>
<path d="M1269.9 607.4L1265.2 640.6" stroke="#ff0000" stroke-width="1"/>
<path d="M1270 610.8L1279 612" stroke="#ff0000" stroke-width="1"/>
<path d="M1270 618L1278 620" stroke="#ff0000" stroke-width="1"/>
<path d="M1301.5 648V685" stroke="#ff0000" stroke-width="1"/>
<path d="M1291 640L1285.8 671.8" stroke="#ff0000" stroke-width="1"/>
<path d="M1297 650.5L1291.7 674.4" stroke="#ff0000" stroke-width="1"/>
<path d="M1236.7 648.6L1230 676.4" stroke="#ff0000" stroke-width="1"/>
<path d="M1230 596l5 1l-1 6l-5 -1Z" stroke="#00ff00" fill="none"/>
<path d="M1227 604l5 1l-1 6l-5 -1Z" stroke="#00ff00" fill="none"/>
<path d="M1274 607l5 1l-1 6l-5 -1Z" stroke="#00ff00" fill="none"/>
<path d="M1273 614l5 1l-1 6l-5 -1Z" stroke="#00ff00" fill="none"/>
<path d="M1227 668l5 1l-1 6l-5 -1Z" stroke="#00ff00" fill="none"/>
<path d="M1279 664l5 1l-1 6l-5 -1Z" stroke="#00ff00" fill="none"/>
<path d="M1288 665l5 1l-1 6l-5 -1Z" stroke="#00ff00" fill="none"/>
<path d="M1250 590L1252 597M1253 589L1255 596M1257 588L1258 596" stroke="#00ff00" stroke-width="1" fill="none" />
<rect x="1296.5" y="663.5" width="4" height="11" stroke="#00ff00" stroke-width="1" fill="none"/>
<rect x="1223.5" y="634.5" width="8" height="4" stroke="#00ff00" stroke-width="1" fill="none"/>
<rect x="1224.5" y="573.5" width="9" height="5" stroke="#ffffff" stroke-width="1" fill="none"/>
<rect x="1182.5" y="775.5" width="172" height="43" stroke="#ffffff" stroke-width="1" fill="none"/>
<path d="M1240.5 775V818" stroke="#ffffff" stroke-width="1"/>
<path d="M1297.5 775V818" stroke="#ffffff" stroke-width="1"/>
<path d="M1297 789.5H1354" stroke="#ffffff" stroke-width="1"/>
<path d="M1297 804.5H1354" stroke="#ffffff" stroke-width="1"/>
<path d="M1182 780.5H1240" stroke="#00ffff" stroke-width="1"/>
<path d="M1182 785.5H1240" stroke="#00ffff" stroke-width="1"/>
<path d="M1182 789.5H1240" stroke="#00ffff" stroke-width="1"/>
<path d="M1182 794.5H1240" stroke="#00ffff" stroke-width="1"/>
<path d="M1191.5 775V799" stroke="#ffffff" stroke-width="1"/>
<path d="M1198.5 775V799" stroke="#ffffff" stroke-width="1"/>
<path d="M1217.5 775V799" stroke="#ffffff" stroke-width="1"/>
<path d="M1231.5 775V799" stroke="#ffffff" stroke-width="1"/>
<path d="M1182 799.5H1297" stroke="#ffffff" stroke-width="1"/>
<path d="M1182 804.5H1297" stroke="#00ffff" stroke-width="1"/>
<path d="M1182 808.5H1297" stroke="#00ffff" stroke-width="1"/>
<path d="M1182 813.5H1297" stroke="#00ffff" stroke-width="1"/>
<path d="M1197.5 799V818" stroke="#ffffff" stroke-width="1"/>
<path d="M1220.5 799V818" stroke="#ffffff" stroke-width="1"/>
<path d="M1268.5 799V818" stroke="#00ffff" stroke-width="1"/>
<path d="M1283.5 799V818" stroke="#00ffff" stroke-width="1"/>
<rect x="1184.5" y="796.5" width="5" height="3" stroke="#00ff00" stroke-width="1" fill="none"/>
<rect x="1192.5" y="796.5" width="5" height="3" stroke="#00ff00" stroke-width="1" fill="none"/>
<rect x="1201.5" y="796.5" width="14" height="3" stroke="#00ff00" stroke-width="1" fill="none"/>
<rect x="1218.5" y="796.5" width="9" height="3" stroke="#00ff00" stroke-width="1" fill="none"/>
<rect x="1233.5" y="796.5" width="6" height="3" stroke="#00ff00" stroke-width="1" fill="none"/>
<rect x="1185.5" y="801.5" width="10" height="4" stroke="#00ff00" stroke-width="1" fill="none"/>
<rect x="1222.5" y="801.5" width="9" height="4" stroke="#00ff00" stroke-width="1" fill="none"/>
<rect x="1185.5" y="810.5" width="9" height="4" stroke="#00ff00" stroke-width="1" fill="none"/>
<rect x="1185.5" y="814.5" width="9" height="3" stroke="#00ff00" stroke-width="1" fill="none"/>
<rect x="1223.5" y="814.5" width="9" height="3" stroke="#00ff00" stroke-width="1" fill="none"/>
<rect x="1247.5" y="800.5" width="14" height="3" stroke="#00ff00" stroke-width="1" fill="none"/>
<rect x="1270.5" y="800.5" width="9" height="3" stroke="#00ff00" stroke-width="1" fill="none"/>
<rect x="1285.5" y="800.5" width="9" height="3" stroke="#00ff00" stroke-width="1" fill="none"/>
<rect x="1288.5" y="806.5" width="3" height="4" stroke="#00ff00" stroke-width="1" fill="none"/>
<rect x="1247.5" y="814.5" width="14" height="3" stroke="#00ff00" stroke-width="1" fill="none"/>
<rect x="1275.5" y="814.5" width="14" height="3" stroke="#00ff00" stroke-width="1" fill="none"/>
<rect x="1322.5" y="795.5" width="7" height="4" stroke="#00ff00" stroke-width="1" fill="none"/></g></svg>
<!--/DRAW-->
<div id="status" class="a">
 <div class="a" style="left:0;top:0;width:26px;height:25px;background:#bed2ea"></div>
 <div class="a" style="left:0;top:20px;width:1920px;height:5px;background:#b7cbe3"></div>
 <div class="a" style="left:0;top:20px;width:34px;height:5px;background:#eef4fb"></div>
 <div class="a" style="left:28px;top:4px;width:13px;height:15px;background:#b8cde6"></div>
 <div class="a" style="left:44px;top:4px;width:15px;height:15px;background:#b8cde6"></div>
 <div class="a" style="left:62px;top:4px;width:15px;height:15px;background:#b8cde6"></div>
 <div class="a" style="left:80px;top:4px;width:15px;height:15px;background:#b8cde6"></div>
 <svg class="a" style="left:28px;top:4px" width="70" height="15" viewBox="0 0 70 15">
  <rect x="3" y="3" width="2" height="9" fill="#555"/><path d="M11 3 L5.5 7.5 L11 12Z" fill="#555"/>
  <path d="M25 3 L20 7.5 L25 12Z" fill="#555"/>
  <path d="M38 3 L43 7.5 L38 12Z" fill="#444"/>
  <path d="M56 3 L61 7.5 L56 12Z" fill="#444"/><rect x="62" y="3" width="2" height="9" fill="#444"/>
 </svg>
 <svg class="a" style="left:98px;top:0" width="120" height="21" viewBox="0 0 120 21">
  <path d="M47 20.5 L58.5 .5 H108.5 L96 20.5Z" fill="#d3e1f0" stroke="#6b8bb3" stroke-width="1"/>
  <path d="M2.5 20.5 V.5 H56.5 L45 20.5Z" fill="#ffffff" stroke="#6b8bb3" stroke-width="1"/>
 </svg>
 <div class="a" style="left:111px;top:2px;font-size:14px;font-weight:bold;color:#2a4a78"><svg class="cjg" viewBox="0 0 12 12"><path d="M1 2.5H11M6 1V4.5M2.5 5H9.5V8H2.5ZM1 10.5H11"/></svg><svg class="cjg" viewBox="0 0 12 12"><path d="M1.5 1.5H10.5V11H1.5ZM3.5 4.5H8.5M6 3V9.5M3.5 8H8.5"/></svg></div>
 <div class="a" style="left:156px;top:2px;font-size:14px;color:#2a4a78"><svg class="cjg" viewBox="0 0 12 12"><path d="M1.5 4H5M3.2 1V11M1 9L5 7M6.5 1.8H11V10.5H6.5ZM6.5 6H11"/></svg><svg class="cjg" viewBox="0 0 12 12"><path d="M1.5 4H5M3.2 1V11M1 9L5 7M6.5 1.8H11V10.5H6.5ZM6.5 6H11"/></svg>1</div>
</div>
</body></html>
